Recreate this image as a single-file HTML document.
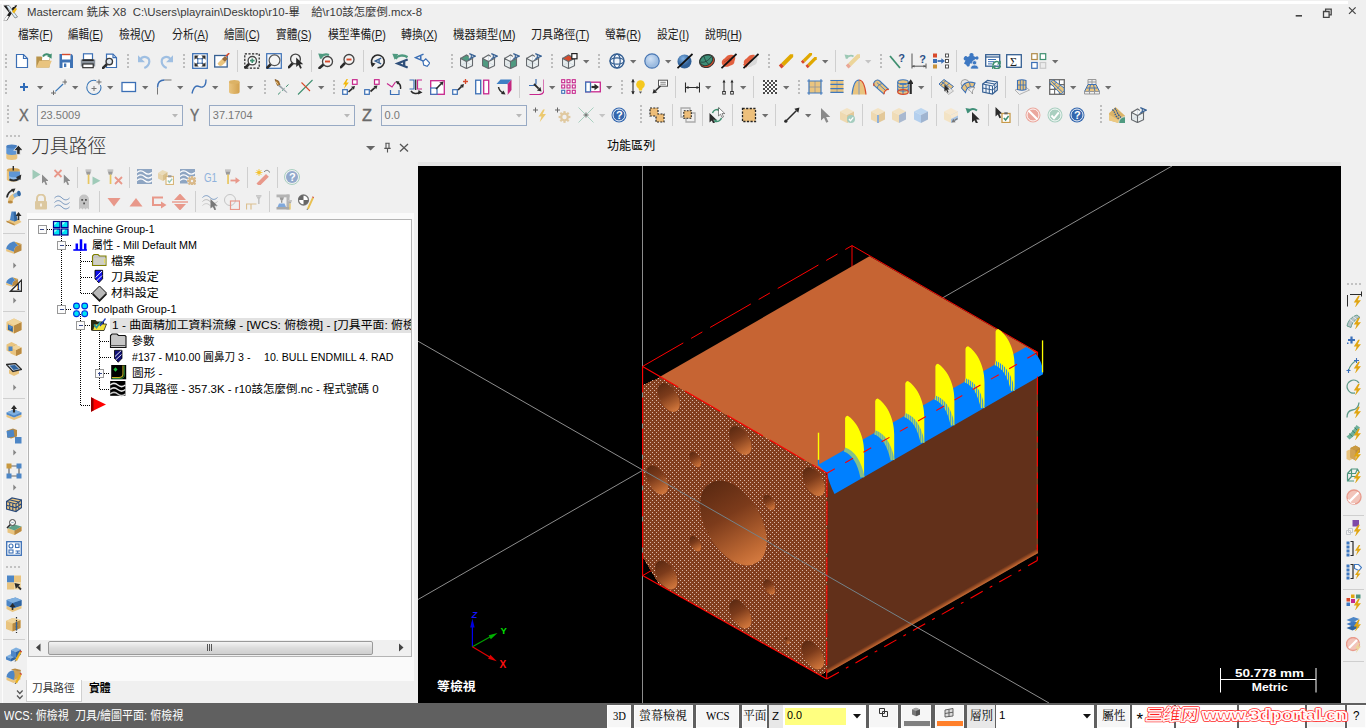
<!DOCTYPE html>
<html><head><meta charset="utf-8"><title>Mastercam</title><style>
html,body{margin:0;padding:0}
html{width:1366px;height:728px;overflow:hidden}
body{width:1366px;height:728px;overflow:hidden;background:#f0f0f0;position:relative;font-family:"Liberation Sans","Noto Sans CJK TC",sans-serif;font-size:12px}
.t{position:absolute;white-space:pre;line-height:1;transform-origin:0 50%}
.a{position:absolute}
i.sp{display:inline-block;width:1em}
u{text-decoration:underline;text-underline-offset:1px}
svg{overflow:visible}
svg.i{position:absolute;overflow:hidden}
</style></head><body><div class="a" style="left:0;top:1px;width:1348px;height:3px;background:#fff"></div>
<div class="a" style="left:1.8px;top:1px;width:1.3px;height:702px;background:#fcfcfc"></div>
<div class="t" style="left:26.5px;top:6.4px;font-size:11.6px;color:#3a3a3a;transform:scaleX(0.9825);">Mastercam 銑床 X8  C:\Users\playrain\Desktop\r10-畢<i class="sp"></i>給\r10該怎麼倒.mcx-8</div>
<svg class="a" style="left:1290px;top:4px" width="72" height="18" viewBox="1290 4 72 18" fill="none" stroke="#444" stroke-width="1.3"><path d="M1295.7,15.8H1302" stroke-width="1.6"/><path d="M1323.5,11.5h5.6v5.8h-5.6z M1325.6,11.3v-2.2h5.6v5.8h-2" /><path d="M1349,7.3l6.6,6.6M1355.6,7.3l-6.6,6.6" stroke-width="1.2"/></svg>
<div class="t" style="left:17.5px;top:28.6px;font-size:12px;color:#1a1a1a;transform:scaleX(0.8845);">檔案(<u>F</u>)</div>
<div class="t" style="left:68.4px;top:28.6px;font-size:12px;color:#1a1a1a;transform:scaleX(0.8772);">編輯(<u>E</u>)</div>
<div class="t" style="left:119px;top:28.6px;font-size:12px;color:#1a1a1a;transform:scaleX(0.9046);">檢視(<u>V</u>)</div>
<div class="t" style="left:171.6px;top:28.6px;font-size:12px;color:#1a1a1a;transform:scaleX(0.9096);">分析(<u>A</u>)</div>
<div class="t" style="left:224.2px;top:28.6px;font-size:12px;color:#1a1a1a;transform:scaleX(0.8802);">繪圖(<u>C</u>)</div>
<div class="t" style="left:276px;top:28.6px;font-size:12px;color:#1a1a1a;transform:scaleX(0.8872);">實體(<u>S</u>)</div>
<div class="t" style="left:327.7px;top:28.6px;font-size:12px;color:#1a1a1a;transform:scaleX(0.9029);">模型準備(<u>P</u>)</div>
<div class="t" style="left:401px;top:28.6px;font-size:12px;color:#1a1a1a;transform:scaleX(0.9071);">轉換(<u>X</u>)</div>
<div class="t" style="left:453px;top:28.6px;font-size:12px;color:#1a1a1a;transform:scaleX(0.9470);">機器類型(<u>M</u>)</div>
<div class="t" style="left:531px;top:28.6px;font-size:12px;color:#1a1a1a;transform:scaleX(0.9235);">刀具路徑(<u>T</u>)</div>
<div class="t" style="left:604.5px;top:28.6px;font-size:12px;color:#1a1a1a;transform:scaleX(0.8851);">螢幕(<u>R</u>)</div>
<div class="t" style="left:656.5px;top:28.6px;font-size:12px;color:#1a1a1a;transform:scaleX(0.9054);">設定(<u>I</u>)</div>
<div class="t" style="left:704.5px;top:28.6px;font-size:12px;color:#1a1a1a;transform:scaleX(0.9097);">說明(<u>H</u>)</div>
<div class="t" style="left:18.9px;top:107.4px;font-size:17.3px;color:#6a6a6a;transform:scaleX(0.8412);-webkit-text-stroke:0.4px #6a6a6a;">X</div>
<div class="a" style="left:37px;top:105px;width:145.7px;height:21px;background:#f2f2f2;border:1px solid #98aac4;box-sizing:border-box;"></div>
<div class="t" style="left:40.5px;top:109.5px;font-size:11px;color:#777;">23.5009</div>
<svg class="a" style="left:172.2px;top:114.25px" width="6" height="3.5" viewBox="0 0 6 3.5"><path d="M0,0H6L3,3.5Z" fill="#b8b8b8"/></svg>
<div class="t" style="left:190.3px;top:107.4px;font-size:17.3px;color:#6a6a6a;transform:scaleX(0.7978);-webkit-text-stroke:0.4px #6a6a6a;">Y</div>
<div class="a" style="left:209.3px;top:105px;width:145.4px;height:21px;background:#f2f2f2;border:1px solid #98aac4;box-sizing:border-box;"></div>
<div class="t" style="left:212.8px;top:109.5px;font-size:11px;color:#777;">37.1704</div>
<svg class="a" style="left:344.2px;top:114.25px" width="6" height="3.5" viewBox="0 0 6 3.5"><path d="M0,0H6L3,3.5Z" fill="#b8b8b8"/></svg>
<div class="t" style="left:362.3px;top:107.4px;font-size:17.3px;color:#6a6a6a;transform:scaleX(0.9467);-webkit-text-stroke:0.4px #6a6a6a;">Z</div>
<div class="a" style="left:381.1px;top:105px;width:145.6px;height:21px;background:#f2f2f2;border:1px solid #98aac4;box-sizing:border-box;"></div>
<div class="t" style="left:384.6px;top:109.5px;font-size:11px;color:#777;">0.0</div>
<svg class="a" style="left:516.2px;top:114.25px" width="6" height="3.5" viewBox="0 0 6 3.5"><path d="M0,0H6L3,3.5Z" fill="#b8b8b8"/></svg>
<svg class="a" style="left:418px;top:166px" width="923" height="537" viewBox="418 166 923 537"><defs>
<pattern id="dots" width="4" height="4" patternUnits="userSpaceOnUse"><rect width="4" height="4" fill="#823e1e"/><rect x="0" y="0" width="1" height="1" fill="#d9b6a6"/><rect x="2" y="2" width="1" height="1" fill="#d9b6a6"/></pattern>
<linearGradient id="hg" x1="0.15" y1="0" x2="0.85" y2="1" gradientTransform="rotate(-60 .5 .5)"><stop offset="0" stop-color="#5e2a13"/><stop offset=".35" stop-color="#8a4421"/><stop offset="1" stop-color="#dd7c42"/></linearGradient>
<pattern id="fr" width="2" height="2" patternUnits="userSpaceOnUse"><rect width="1" height="2" fill="#dcec30"/><rect x="1" width="1" height="2" fill="#2a94e4"/></pattern><linearGradient id="bf" gradientUnits="userSpaceOnUse" x1="930" y1="609.4" x2="932.4" y2="613.6"><stop offset="0" stop-color="#62301a"/><stop offset=".6" stop-color="#a65426"/><stop offset="1" stop-color="#c8703a"/></linearGradient>
<linearGradient id="rf" gradientUnits="userSpaceOnUse" x1="1035.5" y1="0" x2="1038.5" y2="0"><stop offset="0" stop-color="#62301a"/><stop offset="1" stop-color="#874822"/></linearGradient>
</defs><rect x="418" y="166" width="923" height="537" fill="#000"/><g stroke="#8c8c8c" stroke-width="1" fill="none"><line x1="418" y1="599.5" x2="1172" y2="166"/><line x1="642.5" y1="166" x2="642.5" y2="703"/></g><g stroke="#f00" stroke-width="1" fill="none"><line x1="642.6" y1="366.4" x2="852" y2="245.6" stroke-dasharray="47 9 13 9"/><line x1="852" y1="245.6" x2="852" y2="268"/><line x1="852" y1="245.6" x2="1037.5" y2="352.2"/><line x1="642.6" y1="575.6" x2="700" y2="542.5"/></g><polygon points="659.5,377.1 869.4,256.3 1037,352.4 827,473.2" fill="#c66433"/><polygon points="827,473.2 1038,352.4 1038,553 827,673.3" fill="#62301a"/><polygon points="1035,354.1 1038,352.4 1038,553 1035,554.7" fill="url(#rf)"/><polygon points="827,667.8 1038,547.5 1038,553 827,673.3" fill="url(#bf)"/><path d="M642.6,385.3 L659.5,377.1 L823.5,471.2 Q826.8,473.1 827,477 L827,667 Q826.5,676.5 818,674.5 L659.5,585.3 L642.6,557 Z" fill="url(#dots)" shape-rendering="crispEdges"/><linearGradient id="h0" gradientUnits="userSpaceOnUse" x1="710.4" y1="483.2" x2="756.4" y2="562.8"><stop offset="0" stop-color="#5c2a12"/><stop offset=".4" stop-color="#7c3b1b"/><stop offset=".85" stop-color="#c06a34"/><stop offset="1" stop-color="#d47a40"/></linearGradient><path d="M710.4,483.2A46,26.542 60 1 0 756.4,562.8A46,26.542 60 1 0 710.4,483.2z" fill="url(#h0)"/><linearGradient id="h1" gradientUnits="userSpaceOnUse" x1="660.8" y1="383.9" x2="676.5" y2="411.1"><stop offset="0" stop-color="#5c2a12"/><stop offset=".4" stop-color="#7c3b1b"/><stop offset=".85" stop-color="#c06a34"/><stop offset="1" stop-color="#d47a40"/></linearGradient><path d="M660.8,383.9A15.7,9.0589 60 1 0 676.5,411.1A15.7,9.0589 60 1 0 660.8,383.9z" fill="url(#h1)"/><linearGradient id="h2" gradientUnits="userSpaceOnUse" x1="732.5" y1="426.9" x2="748.2" y2="454.1"><stop offset="0" stop-color="#5c2a12"/><stop offset=".4" stop-color="#7c3b1b"/><stop offset=".85" stop-color="#c06a34"/><stop offset="1" stop-color="#d47a40"/></linearGradient><path d="M732.5,426.9A15.7,9.0589 60 1 0 748.2,454.1A15.7,9.0589 60 1 0 732.5,426.9z" fill="url(#h2)"/><linearGradient id="h3" gradientUnits="userSpaceOnUse" x1="805.9" y1="468.1" x2="821.6" y2="495.3"><stop offset="0" stop-color="#5c2a12"/><stop offset=".4" stop-color="#7c3b1b"/><stop offset=".85" stop-color="#c06a34"/><stop offset="1" stop-color="#d47a40"/></linearGradient><path d="M805.9,468.1A15.7,9.0589 60 1 0 821.6,495.3A15.7,9.0589 60 1 0 805.9,468.1z" fill="url(#h3)"/><linearGradient id="h4" gradientUnits="userSpaceOnUse" x1="649.1" y1="466.4" x2="664.9" y2="493.6"><stop offset="0" stop-color="#5c2a12"/><stop offset=".4" stop-color="#7c3b1b"/><stop offset=".85" stop-color="#c06a34"/><stop offset="1" stop-color="#d47a40"/></linearGradient><path d="M649.1,466.4A15.7,9.0589 60 1 0 664.9,493.6A15.7,9.0589 60 1 0 649.1,466.4z" fill="url(#h4)"/><linearGradient id="h5" gradientUnits="userSpaceOnUse" x1="658.4" y1="561.4" x2="674.1" y2="588.6"><stop offset="0" stop-color="#5c2a12"/><stop offset=".4" stop-color="#7c3b1b"/><stop offset=".85" stop-color="#c06a34"/><stop offset="1" stop-color="#d47a40"/></linearGradient><path d="M658.4,561.4A15.7,9.0589 60 1 0 674.1,588.6A15.7,9.0589 60 1 0 658.4,561.4z" fill="url(#h5)"/><linearGradient id="h6" gradientUnits="userSpaceOnUse" x1="732.5" y1="600.4" x2="748.2" y2="627.6"><stop offset="0" stop-color="#5c2a12"/><stop offset=".4" stop-color="#7c3b1b"/><stop offset=".85" stop-color="#c06a34"/><stop offset="1" stop-color="#d47a40"/></linearGradient><path d="M732.5,600.4A15.7,9.0589 60 1 0 748.2,627.6A15.7,9.0589 60 1 0 732.5,600.4z" fill="url(#h6)"/><linearGradient id="h7" gradientUnits="userSpaceOnUse" x1="805.0" y1="641.4" x2="820.8" y2="668.6"><stop offset="0" stop-color="#5c2a12"/><stop offset=".4" stop-color="#7c3b1b"/><stop offset=".85" stop-color="#c06a34"/><stop offset="1" stop-color="#d47a40"/></linearGradient><path d="M805.0,641.4A15.7,9.0589 60 1 0 820.8,668.6A15.7,9.0589 60 1 0 805.0,641.4z" fill="url(#h7)"/><linearGradient id="h8" gradientUnits="userSpaceOnUse" x1="691.2" y1="452.3" x2="699.5" y2="466.7"><stop offset="0" stop-color="#5c2a12"/><stop offset=".4" stop-color="#7c3b1b"/><stop offset=".85" stop-color="#c06a34"/><stop offset="1" stop-color="#d47a40"/></linearGradient><path d="M691.2,452.3A8.3,4.7891 60 1 0 699.5,466.7A8.3,4.7891 60 1 0 691.2,452.3z" fill="url(#h8)"/><linearGradient id="h9" gradientUnits="userSpaceOnUse" x1="765.1" y1="495.2" x2="773.4" y2="509.6"><stop offset="0" stop-color="#5c2a12"/><stop offset=".4" stop-color="#7c3b1b"/><stop offset=".85" stop-color="#c06a34"/><stop offset="1" stop-color="#d47a40"/></linearGradient><path d="M765.1,495.2A8.3,4.7891 60 1 0 773.4,509.6A8.3,4.7891 60 1 0 765.1,495.2z" fill="url(#h9)"/><linearGradient id="h10" gradientUnits="userSpaceOnUse" x1="691.2" y1="536.5" x2="699.5" y2="550.9"><stop offset="0" stop-color="#5c2a12"/><stop offset=".4" stop-color="#7c3b1b"/><stop offset=".85" stop-color="#c06a34"/><stop offset="1" stop-color="#d47a40"/></linearGradient><path d="M691.2,536.5A8.3,4.7891 60 1 0 699.5,550.9A8.3,4.7891 60 1 0 691.2,536.5z" fill="url(#h10)"/><linearGradient id="h11" gradientUnits="userSpaceOnUse" x1="765.1" y1="579.8" x2="773.4" y2="594.2"><stop offset="0" stop-color="#5c2a12"/><stop offset=".4" stop-color="#7c3b1b"/><stop offset=".85" stop-color="#c06a34"/><stop offset="1" stop-color="#d47a40"/></linearGradient><path d="M765.1,579.8A8.3,4.7891 60 1 0 773.4,594.2A8.3,4.7891 60 1 0 765.1,579.8z" fill="url(#h11)"/><linearGradient id="h12" gradientUnits="userSpaceOnUse" x1="785.1" y1="637.2" x2="788.9" y2="643.8"><stop offset="0" stop-color="#5c2a12"/><stop offset=".4" stop-color="#7c3b1b"/><stop offset=".85" stop-color="#c06a34"/><stop offset="1" stop-color="#d47a40"/></linearGradient><path d="M785.1,637.2A3.8,2.1926 60 1 0 788.9,643.8A3.8,2.1926 60 1 0 785.1,637.2z" fill="url(#h12)"/><path d="M817.9,465 L827,473.2 Q829,483 834.5,494 L1043,374.2 L1043,371 Q1041,354 1026,347 Z" fill="#0080ff"/><rect x="817.8" y="432.7" width="1.4" height="27.5" fill="#ff0"/><rect x="817.8" y="459.8" width="1.4" height="5.6" fill="#0080ff"/><rect x="1041.9" y="340.4" width="1.3" height="32" fill="#ff0"/><g transform="translate(845.1 415.6)"><path d="M0,2.6 Q0.4,0 2.6,0.1 C10,4.5 19,18 19,36 L19,62 L18,61.5 C14.5,45 8,36.5 0,33.8 Z" fill="#ff0"/><path d="M0,33.8 C8,36.5 14.5,45 18,61.5" fill="none" stroke="url(#fr)" stroke-width="4.2" transform="translate(-0.6 0.2)"/></g><g transform="translate(875.2 398.3)"><path d="M0,2.6 Q0.4,0 2.6,0.1 C10,4.5 19,18 19,36 L19,62 L18,61.5 C14.5,45 8,36.5 0,33.8 Z" fill="#ff0"/><path d="M0,33.8 C8,36.5 14.5,45 18,61.5" fill="none" stroke="url(#fr)" stroke-width="4.2" transform="translate(-0.6 0.2)"/></g><g transform="translate(905.3 380.9)"><path d="M0,2.6 Q0.4,0 2.6,0.1 C10,4.5 19,18 19,36 L19,62 L18,61.5 C14.5,45 8,36.5 0,33.8 Z" fill="#ff0"/><path d="M0,33.8 C8,36.5 14.5,45 18,61.5" fill="none" stroke="url(#fr)" stroke-width="4.2" transform="translate(-0.6 0.2)"/></g><g transform="translate(935.4 363.6)"><path d="M0,2.6 Q0.4,0 2.6,0.1 C10,4.5 19,18 19,36 L19,62 L18,61.5 C14.5,45 8,36.5 0,33.8 Z" fill="#ff0"/><path d="M0,33.8 C8,36.5 14.5,45 18,61.5" fill="none" stroke="url(#fr)" stroke-width="4.2" transform="translate(-0.6 0.2)"/></g><g transform="translate(965.5 346.2)"><path d="M0,2.6 Q0.4,0 2.6,0.1 C10,4.5 19,18 19,36 L19,62 L18,61.5 C14.5,45 8,36.5 0,33.8 Z" fill="#ff0"/><path d="M0,33.8 C8,36.5 14.5,45 18,61.5" fill="none" stroke="url(#fr)" stroke-width="4.2" transform="translate(-0.6 0.2)"/></g><g transform="translate(995.6 328.9)"><path d="M0,2.6 Q0.4,0 2.6,0.1 C10,4.5 19,18 19,36 L19,62 L18,61.5 C14.5,45 8,36.5 0,33.8 Z" fill="#ff0"/><path d="M0,33.8 C8,36.5 14.5,45 18,61.5" fill="none" stroke="url(#fr)" stroke-width="4.2" transform="translate(-0.6 0.2)"/></g><g stroke="#f00" stroke-width="1.1" fill="none"><line x1="642.6" y1="366.4" x2="827" y2="473.2" stroke-dasharray="20 0 0 0 21 8"/><line x1="642.6" y1="366.4" x2="642.6" y2="575.6" stroke-dasharray="26 5"/><line x1="642.6" y1="575.6" x2="826.7" y2="679.1"/><line x1="827" y1="473.2" x2="826.7" y2="679.1" stroke-dasharray="24 4"/><line x1="826.7" y1="679.1" x2="1037.3" y2="560.6" stroke-dasharray="14 8 3 8"/><line x1="1037.5" y1="376.5" x2="1037.3" y2="560.6" stroke-dasharray="18 6 6 6"/><path d="M1033,350l4.500,2.400v3"/><line x1="827" y1="473.2" x2="1037.5" y2="352.4" stroke-dasharray="9 12"/></g><path d="M418,341.2L642.5,469.9M911.6,624.2L1049,703" stroke="#8c8c8c" stroke-width="1"/><path d="M642.5,469.9L911.6,624.2" stroke="#74838a" stroke-width="1"/></svg>
<div class="a" style="left:26.5px;top:213px;width:387.5px;height:468px;background:#fafafa;"></div>
<div class="a" style="left:414px;top:166px;width:4px;height:537px;background:#f0f0f0;"></div>
<div class="a" style="left:418px;top:162px;width:923px;height:4px;background:#e6e6e6;"></div>
<div class="t" style="left:30.5px;top:137px;font-size:19px;color:#333;font-weight:300;transform:scaleX(0.9934);">刀具路徑</div>
<svg class="a" style="left:360px;top:140px" width="52" height="16" viewBox="360 140 52 16"><path d="M366,146h9.2l-4.6,4.6z" fill="#666"/><path d="M385.3,143.3h4.4M386,143.3v5h3v-5M384.3,148.4h6.4M387.5,148.4v4" stroke="#555" fill="none" stroke-width="1.1"/><path d="M400,144l8,7.5M408,144l-8,7.5" stroke="#555" stroke-width="1.3"/></svg>
<div class="a" style="left:28px;top:219px;width:384px;height:437.5px;background:#fff;border:1px solid #b4b4b4;box-sizing:border-box;"></div>
<div class="a" style="left:110px;top:317.5px;width:301px;height:15.5px;background:#e2e2e2;"></div>
<div class="t" style="left:73.2px;top:223.7px;font-size:11.5px;color:#000;transform:scaleX(0.9172);">Machine Group-1</div>
<div class="t" style="left:92.3px;top:239.7px;font-size:11.5px;color:#000;transform:scaleX(0.9337);">屬性 - Mill Default MM</div>
<div class="t" style="left:111.3px;top:255.7px;font-size:11.5px;color:#000;transform:scaleX(1.0435);">檔案</div>
<div class="t" style="left:111.3px;top:271.7px;font-size:11.5px;color:#000;transform:scaleX(1.0370);">刀具設定</div>
<div class="t" style="left:111.3px;top:287.7px;font-size:11.5px;color:#000;transform:scaleX(1.0370);">材料設定</div>
<div class="t" style="left:92.3px;top:303.7px;font-size:11.5px;color:#000;transform:scaleX(0.9508);">Toolpath Group-1</div>
<div class="a" style="left:110px;top:317px;width:301px;height:16px;overflow:hidden">
<div class="t" style="left:2.2px;top:2.7px;font-size:11.5px;color:#000;transform:scaleX(1.0325);">1 - 曲面精加工資料流線 - [WCS: 俯檢視] - [刀具平面: 俯檢視]</div>
</div>
<div class="t" style="left:131.6px;top:335.7px;font-size:11.5px;color:#000;transform:scaleX(1.0000);">參數</div>
<div class="t" style="left:131.6px;top:351.7px;font-size:11.5px;color:#000;transform:scaleX(0.9221);">#137 - M10.00 圓鼻刀 3 -<i class="sp"></i> 10. BULL ENDMILL 4. RAD</div>
<div class="t" style="left:131.6px;top:367.7px;font-size:11.5px;color:#000;transform:scaleX(1.0156);">圖形 -</div>
<div class="t" style="left:131.6px;top:383.7px;font-size:11.5px;color:#000;transform:scaleX(0.9997);">刀具路徑 - 357.3K - r10該怎麼倒.nc - 程式號碼 0</div>
<svg class="a" style="left:0;top:0" width="420" height="420"><path d="M47,229.5H52M61.5,234V309M66,245.5H72M66,309.5H72M80.5,250V293M81,261.5H92M81,277.5H93M81,293.5H92M80.5,314V405M85,325.5H91M81,405.5H91M99.5,330V389M100,341.5H110M100,357.5H112M104,373.5H110M100,389.5H110" stroke="#000" stroke-width="1" stroke-dasharray="1 1" fill="none" shape-rendering="crispEdges"/>
<rect x="38" y="225.5" width="8" height="8" fill="#fbfbfb" stroke="#989898" shape-rendering="crispEdges"/>
<path d="M40,229.5h4" stroke="#3a4a8c" shape-rendering="crispEdges"/>
<rect x="57.5" y="241.5" width="8" height="8" fill="#fbfbfb" stroke="#989898" shape-rendering="crispEdges"/>
<path d="M59.5,245.5h4" stroke="#3a4a8c" shape-rendering="crispEdges"/>
<rect x="57.5" y="305.5" width="8" height="8" fill="#fbfbfb" stroke="#989898" shape-rendering="crispEdges"/>
<path d="M59.5,309.5h4" stroke="#3a4a8c" shape-rendering="crispEdges"/>
<rect x="76.5" y="321.5" width="8" height="8" fill="#fbfbfb" stroke="#989898" shape-rendering="crispEdges"/>
<path d="M78.5,325.5h4" stroke="#3a4a8c" shape-rendering="crispEdges"/>
<rect x="95.5" y="369.5" width="8" height="8" fill="#fbfbfb" stroke="#989898" shape-rendering="crispEdges"/>
<path d="M97.5,373.5h4" stroke="#3a4a8c" shape-rendering="crispEdges"/>
<path d="M99.5,371.5v4" stroke="#3a4a8c" shape-rendering="crispEdges"/>
</svg>
<div class="a" style="left:29px;top:640px;width:382px;height:15.5px;background:#f0f0f0;"></div>
<div class="a" style="left:47.6px;top:640.5px;width:325px;height:14.5px;border:1px solid #9a9a9a;box-sizing:border-box;background:linear-gradient(#f4f4f4,#dcdcdc 50%,#cfcfcf);border-radius:2px"></div>
<svg class="a" style="left:30px;top:640px" width="381" height="16" viewBox="30 640 381 16"><path d="M40.5,643.5v8l-4.500,-4z M399,643.5v8l4.500,-4z" fill="#444"/><path d="M207.5,644v7M209.5,644v7M211.5,644v7" stroke="#555" stroke-width="1"/></svg>
<div class="a" style="left:26px;top:680px;width:56px;height:22px;background:#fff;border:1px solid #d0d0d0;box-sizing:border-box;border-top:none"></div>
<div class="t" style="left:32.4px;top:682.5px;font-size:11px;color:#333;transform:scaleX(0.9682);">刀具路徑</div>
<div class="t" style="left:89.2px;top:682.5px;font-size:11px;color:#000;font-weight:bold;transform:scaleX(0.9773);">實體</div>
<svg class="a" style="left:15px;top:689px" width="10" height="12" viewBox="0 0 10 12"><path d="M2,1.5l2.800,3l2.800,-3M2,6.5l2.800,3l2.800,-3" stroke="#555" fill="none" stroke-width="1.2"/></svg>
<div class="t" style="left:607px;top:139.5px;font-size:12px;color:#000;transform:scaleX(1.0042);">功能區列</div>
<div class="t" style="left:437px;top:680.5px;font-size:12.5px;color:#fff;font-weight:bold;transform:scaleX(1.0320);">等檢視</div>
<svg class="a" style="left:440px;top:600px" width="90" height="80" viewBox="440 600 90 80"><path d="M472.4,646.8V622" stroke="#0000f0" stroke-width="1.2"/><path d="M472.4,618.5l-2.200,9h4.400z" fill="#0000e0"/><path d="M472.4,646.8L493,635.3" stroke="#00a000" stroke-width="1.2"/><path d="M497.5,633l-8.800,2.300l2.100,3.900z" fill="#00b000"/><path d="M472.4,646.8L492.5,658.8" stroke="#e00000" stroke-width="1.2"/><path d="M496.8,661.3l-6.500,-6.500l-2.200,3.900z" fill="#e00000"/><text x="471.8" y="618" font-size="9" font-weight="bold" font-style="italic" fill="#1414ff" font-family="Liberation Sans">Z</text><text x="500.5" y="633.5" font-size="9.500" font-weight="bold" fill="#00e000" font-family="Liberation Sans">Y</text><text x="499.5" y="668" font-size="10" font-weight="bold" fill="#ff1010" font-family="Liberation Sans">X</text></svg>
<svg class="a" style="left:1215px;top:664px" width="110" height="32" viewBox="1215 664 110 32"><path d="M1220.5,668V692.5M1316,668V692.5M1220.5,679.5H1316" stroke="#fff" stroke-width="1"/><text x="1235" y="677.3" font-size="11" font-weight="bold" fill="#fff" font-family="Liberation Sans" textLength="69" lengthAdjust="spacingAndGlyphs">50.778 mm</text><text x="1251.8" y="691" font-size="11" font-weight="bold" fill="#fff" font-family="Liberation Sans" textLength="36" lengthAdjust="spacingAndGlyphs">Metric</text></svg>
<div class="a" style="left:0px;top:703px;width:1366px;height:25px;background:#606060;"></div>
<div class="t" style="left:3.7px;top:710px;font-size:12px;color:#fff;transform:scaleX(0.9178);">WCS: 俯檢視  刀具/繪圖平面: 俯檢視</div>
<div class="a" style="left:607px;top:705px;width:24.2px;height:23px;background:#f6f6f6;border:1px solid #fdfdfd;box-sizing:border-box;"></div>
<div class="t" style="left:612.6px;top:709.5px;font-size:12.5px;color:#000;font-family:'Liberation Serif','Noto Serif CJK SC',serif;transform:scaleX(0.8507);">3D</div>
<div class="a" style="left:633.5px;top:705px;width:59.5px;height:23px;background:#f6f6f6;border:1px solid #fdfdfd;box-sizing:border-box;"></div>
<div class="t" style="left:639.25px;top:709.5px;font-size:12.5px;color:#000;font-family:'Liberation Serif','Noto Serif CJK SC',serif;transform:scaleX(0.9600);">螢幕檢視</div>
<div class="a" style="left:695.5px;top:705px;width:43.7px;height:23px;background:#f6f6f6;border:1px solid #fdfdfd;box-sizing:border-box;"></div>
<div class="t" style="left:705.6px;top:709.5px;font-size:12.5px;color:#000;font-family:'Liberation Serif','Noto Serif CJK SC',serif;transform:scaleX(0.8674);">WCS</div>
<div class="a" style="left:741.5px;top:705px;width:25.5px;height:23px;background:#f6f6f6;border:1px solid #fdfdfd;box-sizing:border-box;"></div>
<div class="t" style="left:742.5px;top:709.5px;font-size:12.5px;color:#000;font-family:'Liberation Serif','Noto Serif CJK SC',serif;transform:scaleX(0.9400);">平面</div>
<div class="a" style="left:769px;top:705px;width:13.5px;height:23px;background:#e8e8e8;"></div>
<div class="t" style="left:772px;top:710.5px;font-size:11.5px;color:#000;transform:scaleX(0.9956);">Z</div>
<div class="a" style="left:783px;top:705px;width:83px;height:23px;background:#fff;"></div>
<div class="a" style="left:784.5px;top:707.5px;width:61.5px;height:17px;background:#ffff80;"></div>
<div class="t" style="left:786.5px;top:709.5px;font-size:11.5px;color:#000;transform:scaleX(0.9375);">0.0</div>
<svg class="a" style="left:853px;top:714.25px" width="8" height="4.5" viewBox="0 0 8 4.5"><path d="M0,0H8L4,4.5Z" fill="#111"/></svg>
<div class="a" style="left:868.5px;top:705px;width:29.8px;height:23px;background:#f6f6f6;border:1px solid #fdfdfd;box-sizing:border-box;"></div>
<div class="a" style="left:901.2px;top:705px;width:30.1px;height:23px;background:#f6f6f6;border:1px solid #fdfdfd;box-sizing:border-box;"></div>
<div class="a" style="left:934.5px;top:705px;width:29.8px;height:23px;background:#f6f6f6;border:1px solid #fdfdfd;box-sizing:border-box;"></div>
<div class="a" style="left:903.5px;top:720.5px;width:26px;height:5.5px;background:#808080;"></div>
<div class="a" style="left:936.5px;top:720.5px;width:26px;height:5.5px;background:#ff7f2a;"></div>
<svg class="a" style="left:868px;top:705px" width="98" height="16" viewBox="868 705 98 16"><path d="M879.5,708.5h5v5h-5z M882.5,711.5h5v5h-5z" fill="#f4f4f4" stroke="#333" stroke-width="1"/><path d="M912,709.5l4,-1.700l4,1.700v5l-4,1.800l-4,-1.800z" fill="#777"/><path d="M912,709.5l4,1.600l4,-1.600l-4,-1.700z" fill="#aaa"/><path d="M916,711.1v5.200l4,-1.800v-5z" fill="#555"/><path d="M945,710l8,-1.500v7.500l-8,1z" fill="#ddd" stroke="#555" stroke-width=".9"/><path d="M949,709.3v7.300M945,713.5l8,-1.300" stroke="#555" stroke-width=".9"/></svg>
<div class="a" style="left:967px;top:705px;width:27.5px;height:23px;background:#e8e8e8;"></div>
<div class="t" style="left:969.5px;top:710px;font-size:12.5px;color:#000;font-family:'Liberation Serif','Noto Serif CJK SC',serif;transform:scaleX(0.9200);">層別</div>
<div class="a" style="left:995.5px;top:705px;width:98.5px;height:23px;background:#fff;"></div>
<div class="t" style="left:999px;top:709.5px;font-size:11.5px;color:#000;">1</div>
<svg class="a" style="left:1083.2px;top:714.25px" width="8" height="4.5" viewBox="0 0 8 4.5"><path d="M0,0H8L4,4.5Z" fill="#111"/></svg>
<div class="a" style="left:1097.3px;top:705px;width:32.7px;height:23px;background:#f6f6f6;border:1px solid #fdfdfd;box-sizing:border-box;"></div>
<div class="t" style="left:1101.9px;top:709.5px;font-size:12.5px;color:#000;font-family:'Liberation Serif','Noto Serif CJK SC',serif;transform:scaleX(0.9400);">屬性</div>
<div class="a" style="left:1132.4px;top:705px;width:41.6px;height:23px;background:#fff;border:1px solid #fdfdfd;box-sizing:border-box;"></div>
<div class="a" style="left:1176px;top:705px;width:61.3px;height:23px;background:#fff;border:1px solid #fdfdfd;box-sizing:border-box;"></div>
<div class="a" style="left:1239.3px;top:705px;width:65.4px;height:23px;background:#fff;border:1px solid #fdfdfd;box-sizing:border-box;"></div>
<div class="a" style="left:1306.8px;top:705px;width:38.6px;height:23px;background:#f6f6f6;border:1px solid #fdfdfd;box-sizing:border-box;"></div>
<div class="a" style="left:1347.2px;top:705px;width:18.8px;height:23px;background:#f6f6f6;border:1px solid #fdfdfd;box-sizing:border-box;"></div>
<div class="t" style="left:1353.35px;top:709.5px;font-size:12.5px;color:#000;transform:scaleX(0.9348);">?</div>
<div class="t" style="left:1136.5px;top:710.5px;font-size:17px;color:#000;">*</div>
<svg class="a" style="left:1164px;top:714.75px" width="6" height="3.5" viewBox="0 0 6 3.5"><path d="M0,0H6L3,3.5Z" fill="#222"/></svg>
<svg class="a" style="left:1226px;top:714.75px" width="6" height="3.5" viewBox="0 0 6 3.5"><path d="M0,0H6L3,3.5Z" fill="#222"/></svg>
<svg class="a" style="left:1294px;top:714.75px" width="6" height="3.5" viewBox="0 0 6 3.5"><path d="M0,0H6L3,3.5Z" fill="#222"/></svg>
<svg class="a" style="left:1140px;top:702px" width="215" height="26" viewBox="1140 702 215 26"><g fill="none" stroke="#ff2a2a" stroke-width="3.6" stroke-linejoin="round"><text x="1203" y="719.6" font-size="14" font-weight="bold" font-family="Liberation Sans" textLength="144" lengthAdjust="spacingAndGlyphs">www.3dportal.cn</text><g stroke-width="3.5"><text transform="translate(1147.5 706.8) skewX(-8) scale(1.12 1)" x="0 15.71 31.43" y="13.2" font-size="15" font-weight="bold" font-family="'Liberation Sans','Noto Sans CJK SC',sans-serif">三维网</text></g></g><g fill="none" stroke="#fff" stroke-width="2.2" stroke-linejoin="round"><text x="1203" y="719.6" font-size="14" font-weight="bold" font-family="Liberation Sans" textLength="144" lengthAdjust="spacingAndGlyphs">www.3dportal.cn</text><g stroke-width="2.1"><text transform="translate(1147.5 706.8) skewX(-8) scale(1.12 1)" x="0 15.71 31.43" y="13.2" font-size="15" font-weight="bold" font-family="'Liberation Sans','Noto Sans CJK SC',sans-serif">三维网</text></g></g><g fill="#ff2020" stroke="#fff" stroke-width=".8"><text x="1203" y="719.6" font-size="14" font-weight="bold" font-family="Liberation Sans" textLength="144" lengthAdjust="spacingAndGlyphs">www.3dportal.cn</text><g stroke-width=".7"><text transform="translate(1147.5 706.8) skewX(-8) scale(1.12 1)" x="0 15.71 31.43" y="13.2" font-size="15" font-weight="bold" font-family="'Liberation Sans','Noto Sans CJK SC',sans-serif">三维网</text></g></g></svg>
<svg class="a" style="left:4.9px;top:53.7px" width="2" height="16"><rect x="0" y="0" width="2" height="2" fill="#bdbdbd"/><rect x="0" y="4" width="2" height="2" fill="#bdbdbd"/><rect x="0" y="8" width="2" height="2" fill="#bdbdbd"/><rect x="0" y="12" width="2" height="2" fill="#bdbdbd"/></svg>
<svg class="i" style="left:14px;top:53px" width="16" height="16" viewBox="0 0 16 16"><path d="M2.5,1.5h7l4,4v9h-11z" fill="#fff" stroke="#3b6fb5" stroke-width="1.2"/><path d="M9.5,1.5v4h4" fill="none" stroke="#3b6fb5" stroke-width="1.2"/></svg>
<svg class="i" style="left:36px;top:53px" width="16" height="16" viewBox="0 0 16 16"><path d="M0.3,3.5h5l1.5,1.7h6.7v9.3h-13.2z" fill="#b8934a"/><path d="M6,5.2l2,-2h5v4h-7z" fill="#fff"/><path d="M0.3,14.5l3,-6.8h12.5l-3,6.8z" fill="#e9c47f"/><path d="M7,3.6c1.500,-2.600 5,-3.200 7.200,-.8" fill="none" stroke="#3f8f70" stroke-width="2"/><path d="M15.800,0.400l-.3,5.400l-4.600,-2.800z" fill="#3f8f70"/></svg>
<svg class="i" style="left:57.6px;top:53px" width="16" height="16" viewBox="0 0 16 16"><path d="M1.5,1h12l1.5,1.5v12.5h-13.5z" fill="#3f73b5"/><rect x="4" y="1" width="8.5" height="5.5" fill="#fff"/><rect x="4" y="0.8" width="8.5" height="1.4" fill="#d84a2b"/><rect x="4.5" y="9.5" width="7.5" height="5.5" fill="#fff"/><rect x="6" y="10.5" width="2.3" height="3.6" fill="#3f73b5"/></svg>
<svg class="i" style="left:80.3px;top:53px" width="16" height="16" viewBox="0 0 16 16"><rect x="3.5" y="0.8" width="9" height="6" fill="#fff" stroke="#3b6fb5" stroke-width="1.2"/><path d="M0.8,6.5h14.4v7h-14.4z" fill="#8a929b"/><rect x="2.3" y="6.300" width="11.400" height="1.700" fill="#2a2a2a"/><rect x="2.800" y="11" width="10.400" height="3.700" fill="#fff" stroke="#222" stroke-width="1.100"/></svg>
<svg class="i" style="left:102.4px;top:53px" width="16" height="16" viewBox="0 0 16 16"><path d="M4.5,1.2h6.5l3.5,3.5v9.8h-10z" fill="#fff" stroke="#3b6fb5" stroke-width="1.2"/><path d="M11,1.2v3.5h3.5" fill="none" stroke="#3b6fb5" stroke-width="1.2"/><path d="M5.2,10.8L1,15" fill="none" stroke="#2b2b2b" stroke-width="2.5" stroke-linecap="round"/><circle cx="7.3" cy="8.6" r="3.2" fill="#dfe6ee" stroke="#3a3a3a" stroke-width="1.4"/></svg>
<svg class="a" style="left:127px;top:53.7px" width="2" height="16"><rect x="0" y="0" width="2" height="2" fill="#bdbdbd"/><rect x="0" y="4" width="2" height="2" fill="#bdbdbd"/><rect x="0" y="8" width="2" height="2" fill="#bdbdbd"/><rect x="0" y="12" width="2" height="2" fill="#bdbdbd"/></svg>
<svg class="i" style="left:136.5px;top:53px" width="16" height="16" viewBox="0 0 16 16"><path d="M3,6.8c3,-4.500 9.500,-3.500 9.300,2c-.2,3 -2,5 -5,6.200" fill="none" stroke="#9fbfe2" stroke-width="2.2"/><path d="M1,2.2v7h7z" fill="#9fbfe2"/></svg>
<svg class="i" style="left:158px;top:53px" width="16" height="16" viewBox="0 0 16 16"><g transform="translate(16 0) scale(-1 1)"><path d="M3,6.8c3,-4.500 9.500,-3.500 9.300,2c-.2,3 -2,5 -5,6.200" fill="none" stroke="#9fbfe2" stroke-width="2.2"/><path d="M1,2.2v7h7z" fill="#9fbfe2"/></g></svg>
<svg class="a" style="left:183px;top:53.7px" width="2" height="16"><rect x="0" y="0" width="2" height="2" fill="#bdbdbd"/><rect x="0" y="4" width="2" height="2" fill="#bdbdbd"/><rect x="0" y="8" width="2" height="2" fill="#bdbdbd"/><rect x="0" y="12" width="2" height="2" fill="#bdbdbd"/></svg>
<svg class="i" style="left:192px;top:53px" width="16" height="16" viewBox="0 0 16 16"><rect x="0.7" y="0.7" width="14.6" height="14.6" fill="#fff" stroke="#3b6fb5" stroke-width="1.3"/><path d="M4.5,4.5l7,7M11.5,4.5l-7,7" fill="none" stroke="#2b2b2b" stroke-width="1.5"/><path d="M2.5,2.5h4.2l-4.2,4.2zM13.5,2.5v4.2l-4.2,-4.2zM2.5,13.5v-4.2l4.2,4.2zM13.5,13.5h-4.2l4.2,-4.2z" fill="#2b2b2b"/><rect x="5.8" y="5.8" width="4.4" height="4.4" fill="#fff" stroke="#3b6fb5" stroke-width="1"/></svg>
<svg class="i" style="left:214px;top:53px" width="16" height="16" viewBox="0 0 16 16"><rect x="0.7" y="2.5" width="12.5" height="11.5" fill="#fff" stroke="#355f92" stroke-width="1.3"/><path d="M3.5,10.5l5,-5l3.5,3.5l-4,3.500c-2,1 -3.500,0 -4.500,-2z" fill="#e9c47f"/><path d="M8,6l3,-3l2.800,2.800l-2.800,3z" fill="#9a6a3a"/><path d="M12,3.3l3.200,-3.200" fill="none" stroke="#d84a2b" stroke-width="1.6"/></svg>
<div class="a" style="left:237px;top:50px;width:1px;height:22px;background:#cfcfcf;"></div>
<svg class="i" style="left:244px;top:53px" width="16" height="16" viewBox="0 0 16 16"><rect x="0.8" y="0.8" width="14.4" height="14.4" fill="none" stroke="#222" stroke-width="1.2" stroke-dasharray="2.2 1.4"/><path d="M5,11L1.5,14.5" fill="none" stroke="#2b2b2b" stroke-width="2.6" stroke-linecap="round"/><circle cx="8.3" cy="7.7" r="4.2" fill="#fff" stroke="#444" stroke-width="1.3"/><path d="M8.3,5.4v4.6M6,7.7h4.6" fill="none" stroke="#3f8f70" stroke-width="1.7"/></svg>
<svg class="i" style="left:266px;top:53px" width="16" height="16" viewBox="0 0 16 16"><rect x="0.7" y="0.7" width="14.6" height="14.6" fill="#f6f8fb" stroke="#3b6fb5" stroke-width="1.2"/><path d="M4.5,11.5L1.5,14.5" fill="none" stroke="#2b2b2b" stroke-width="2.6" stroke-linecap="round"/><circle cx="8.5" cy="7.3" r="5.4" fill="#f4f4f4" stroke="#555" stroke-width="1.2"/></svg>
<svg class="i" style="left:288px;top:53px" width="16" height="16" viewBox="0 0 16 16"><path d="M4.5,10.5L1,14.2" fill="none" stroke="#2b2b2b" stroke-width="2.6" stroke-linecap="round"/><circle cx="7.5" cy="6" r="4.9" fill="#f4f4f4" stroke="#444" stroke-width="1.3"/><path d="M0,0v10l2.400,-2.200l1.800,4l1.700,-.8l-1.800,-3.900h3.300z" fill="#2b2b2b" transform="translate(8.2 4.6) scale(0.95)"/></svg>
<div class="a" style="left:311px;top:50px;width:1px;height:22px;background:#cfcfcf;"></div>
<svg class="i" style="left:317.8px;top:53px" width="16" height="16" viewBox="0 0 16 16"><path d="M5.5,11.5L1.5,15" fill="none" stroke="#2b2b2b" stroke-width="2.6" stroke-linecap="round"/><circle cx="9.5" cy="8.5" r="5" fill="#f4f4f4" stroke="#444" stroke-width="1.3"/><path d="M7,8.5h5" fill="none" stroke="#d84a2b" stroke-width="1.9"/><path d="M3,5.5c.5,-3.500 4,-5 8,-3.500" fill="none" stroke="#4f9a80" stroke-width="2.2"/><path d="M0.200,0.600l5.800,.4l-3.800,5.200z" fill="#4f9a80"/></svg>
<svg class="i" style="left:340px;top:53px" width="16" height="16" viewBox="0 0 16 16"><path d="M4.5,10.5L1,14.2" fill="none" stroke="#2b2b2b" stroke-width="2.6" stroke-linecap="round"/><circle cx="9" cy="6.5" r="5" fill="#f4f4f4" stroke="#444" stroke-width="1.3"/><path d="M6.5,6.5h5" fill="none" stroke="#d84a2b" stroke-width="1.9"/></svg>
<div class="a" style="left:363px;top:50px;width:1px;height:22px;background:#cfcfcf;"></div>
<svg class="i" style="left:370.4px;top:53px" width="16" height="16" viewBox="0 0 16 16"><path d="M3.2,12.8a6.400,6.400 0 1 1 4.300,2" fill="none" stroke="#2b2b2b" stroke-width="1.6"/><path d="M0.6,9.3l5,1.200l-3.600,3.800z" fill="#2b2b2b"/><path d="M0,7L3.2,0L6.4,7M1.2,4.6h4" fill="none" stroke="#355f92" stroke-width="1.5" transform="translate(5.2 10.9) rotate(-90) scale(.9 .85)"/></svg>
<svg class="i" style="left:391.7px;top:53px" width="16" height="16" viewBox="0 0 16 16"><path d="M3.5,5.8c2,-3.600 8,-4.400 12,-1.600" fill="none" stroke="#4f9a80" stroke-width="2.4"/><path d="M0.300,0.800l6,.3l-3.600,5.600z" fill="#4f9a80"/><path d="M0,7L3.2,0L6.4,7M1.2,4.6h4" fill="none" stroke="#2f4f7a" stroke-width="1.6" transform="translate(5.4 14.6) rotate(-90) scale(1.27 1.47)"/></svg>
<svg class="i" style="left:414px;top:53px" width="16" height="16" viewBox="0 0 16 16"><path d="M0,7L3.2,0L6.4,7M1.2,4.6h4" fill="none" stroke="#3b6fb5" stroke-width="1.35" transform="translate(1.4 8.1) rotate(-90) scale(1.09 1.16)"/><path d="M9,8.5l2.800,-2.600l4,4.200l-2.600,3.300l-3.500,-1.300z" fill="#fff" stroke="#3b6fb5" stroke-width="1.2"/></svg>
<svg class="a" style="left:451px;top:53.7px" width="2" height="16"><rect x="0" y="0" width="2" height="2" fill="#bdbdbd"/><rect x="0" y="4" width="2" height="2" fill="#bdbdbd"/><rect x="0" y="8" width="2" height="2" fill="#bdbdbd"/><rect x="0" y="12" width="2" height="2" fill="#bdbdbd"/></svg>
<svg class="i" style="left:460px;top:53px" width="16" height="16" viewBox="0 0 16 16"><path d="M0.5,5.5L6.5,2L12.5,5.5L6.5,8.6z" fill="#f6f8f8"/><path d="M0.5,5.5L6.5,8.6V15.6L0.5,12.7z" fill="#e6ecec"/><path d="M6.5,8.6L12.5,5.5V12.7L6.5,15.6z" fill="#eef2f2"/><path d="M6.5,2V9.3M0.5,12.7L6.5,9.3L12.5,12.7" fill="none" stroke="#cfd9e2" stroke-width="0.8"/><path d="M0.5,5.5L6.5,2L12.5,5.5L6.5,8.6z" fill="#4f9a80"/><path d="M0.5,5.5L6.5,2L12.5,5.5L6.5,8.6zM0.5,5.5L6.5,8.6V15.6L0.5,12.7zM6.5,8.6L12.5,5.5V12.7L6.5,15.6z" fill="none" stroke="#666a6e" stroke-width="1.1"/><path d="M8.6,0.2L16,3.4L9,6.2z" fill="#f0f0f0"/><path d="M9.3,0.6L15.4,3.1L9.6,5.6" fill="none" stroke="#355f92" stroke-width="1.2"/><path d="M11.3,1.6V4.7" fill="none" stroke="#355f92" stroke-width="1.1"/><path d="M9.6,5.6L8.8,7" fill="none" stroke="#355f92" stroke-width="1"/></svg>
<svg class="i" style="left:482px;top:53px" width="16" height="16" viewBox="0 0 16 16"><path d="M0.5,5.5L6.5,2L12.5,5.5L6.5,8.6z" fill="#f6f8f8"/><path d="M0.5,5.5L6.5,8.6V15.6L0.5,12.7z" fill="#e6ecec"/><path d="M6.5,8.6L12.5,5.5V12.7L6.5,15.6z" fill="#eef2f2"/><path d="M6.5,2V9.3M0.5,12.7L6.5,9.3L12.5,12.7" fill="none" stroke="#cfd9e2" stroke-width="0.8"/><path d="M0.5,5.5L6.5,8.6V15.6L0.5,12.7z" fill="#4f9a80"/><path d="M0.5,5.5L6.5,2L12.5,5.5L6.5,8.6zM0.5,5.5L6.5,8.6V15.6L0.5,12.7zM6.5,8.6L12.5,5.5V12.7L6.5,15.6z" fill="none" stroke="#666a6e" stroke-width="1.1"/><path d="M8.6,0.2L16,3.4L9,6.2z" fill="#f0f0f0"/><path d="M9.3,0.6L15.4,3.1L9.6,5.6" fill="none" stroke="#355f92" stroke-width="1.2"/><path d="M11.3,1.6V4.7" fill="none" stroke="#355f92" stroke-width="1.1"/><path d="M9.6,5.6L8.8,7" fill="none" stroke="#355f92" stroke-width="1"/></svg>
<svg class="i" style="left:504px;top:53px" width="16" height="16" viewBox="0 0 16 16"><path d="M0.5,5.5L6.5,2L12.5,5.5L6.5,8.6z" fill="#f6f8f8"/><path d="M0.5,5.5L6.5,8.6V15.6L0.5,12.7z" fill="#e6ecec"/><path d="M6.5,8.6L12.5,5.5V12.7L6.5,15.6z" fill="#eef2f2"/><path d="M6.5,2V9.3M0.5,12.7L6.5,9.3L12.5,12.7" fill="none" stroke="#cfd9e2" stroke-width="0.8"/><path d="M6.5,8.6L12.5,5.5V12.7L6.5,15.6z" fill="#4f9a80"/><path d="M0.5,5.5L6.5,2L12.5,5.5L6.5,8.6zM0.5,5.5L6.5,8.6V15.6L0.5,12.7zM6.5,8.6L12.5,5.5V12.7L6.5,15.6z" fill="none" stroke="#666a6e" stroke-width="1.1"/><path d="M8.6,0.2L16,3.4L9,6.2z" fill="#f0f0f0"/><path d="M9.3,0.6L15.4,3.1L9.6,5.6" fill="none" stroke="#355f92" stroke-width="1.2"/><path d="M11.3,1.6V4.7" fill="none" stroke="#355f92" stroke-width="1.1"/><path d="M9.6,5.6L8.8,7" fill="none" stroke="#355f92" stroke-width="1"/></svg>
<svg class="i" style="left:526px;top:53px" width="16" height="16" viewBox="0 0 16 16"><path d="M0.5,5.5L6.5,2L12.5,5.5L6.5,8.6z" fill="#f6f8f8"/><path d="M0.5,5.5L6.5,8.6V15.6L0.5,12.7z" fill="#e6ecec"/><path d="M6.5,8.6L12.5,5.5V12.7L6.5,15.6z" fill="#eef2f2"/><path d="M6.5,2V9.3M0.5,12.7L6.5,9.3L12.5,12.7" fill="none" stroke="#cfd9e2" stroke-width="0.8"/><path d="M0.5,5.5L6.5,2L12.5,5.5L6.5,8.6zM0.5,5.5L6.5,8.6V15.6L0.5,12.7zM6.5,8.6L12.5,5.5V12.7L6.5,15.6z" fill="none" stroke="#666a6e" stroke-width="1.1"/><path d="M8.6,0.2L16,3.4L9,6.2z" fill="#f0f0f0"/><path d="M9.3,0.6L15.4,3.1L9.6,5.6" fill="none" stroke="#355f92" stroke-width="1.2"/><path d="M11.3,1.6V4.7" fill="none" stroke="#355f92" stroke-width="1.1"/><path d="M9.6,5.6L8.8,7" fill="none" stroke="#355f92" stroke-width="1"/></svg>
<svg class="a" style="left:551px;top:53.7px" width="2" height="16"><rect x="0" y="0" width="2" height="2" fill="#bdbdbd"/><rect x="0" y="4" width="2" height="2" fill="#bdbdbd"/><rect x="0" y="8" width="2" height="2" fill="#bdbdbd"/><rect x="0" y="12" width="2" height="2" fill="#bdbdbd"/></svg>
<svg class="i" style="left:562px;top:53px" width="16" height="16" viewBox="0 0 16 16"><path d="M0.5,5.5L6.5,2L12.5,5.5L6.5,8.6z" fill="#f6f8f8"/><path d="M0.5,5.5L6.5,8.6V15.6L0.5,12.7z" fill="#e6ecec"/><path d="M6.5,8.6L12.5,5.5V12.7L6.5,15.6z" fill="#eef2f2"/><path d="M6.5,2V9.3M0.5,12.7L6.5,9.3L12.5,12.7" fill="none" stroke="#cfd9e2" stroke-width="0.8"/><path d="M0.5,5.5L6.5,2L12.5,5.5L6.5,8.6z" fill="#d84a2b"/><path d="M0.5,5.5L6.5,2L12.5,5.5L6.5,8.6zM0.5,5.5L6.5,8.6V15.6L0.5,12.7zM6.5,8.6L12.5,5.5V12.7L6.5,15.6z" fill="none" stroke="#666a6e" stroke-width="1.1"/><rect x="9.8" y="0.6" width="5.2" height="5.2" fill="#fff" stroke="#222" stroke-width="1.2"/></svg>
<svg class="a" style="left:583.3px;top:60px" width="6.4" height="3.6" viewBox="0 0 6.4 3.6"><path d="M0,0H6.4L3.2,3.6Z" fill="#6e6e6e"/></svg>
<svg class="a" style="left:598px;top:53.7px" width="2" height="16"><rect x="0" y="0" width="2" height="2" fill="#bdbdbd"/><rect x="0" y="4" width="2" height="2" fill="#bdbdbd"/><rect x="0" y="8" width="2" height="2" fill="#bdbdbd"/><rect x="0" y="12" width="2" height="2" fill="#bdbdbd"/></svg>
<svg class="i" style="left:609px;top:53px" width="16" height="16" viewBox="0 0 16 16"><circle cx="8" cy="8" r="7" fill="#eef3f9" stroke="#355f92" stroke-width="1.3"/><ellipse cx="8" cy="8" rx="3.2" ry="7" fill="none" stroke="#355f92" stroke-width="1.2"/><ellipse cx="8" cy="8" rx="7" ry="3.2" fill="none" stroke="#355f92" stroke-width="1.2"/></svg>
<svg class="a" style="left:630.1px;top:60px" width="6.4" height="3.6" viewBox="0 0 6.4 3.6"><path d="M0,0H6.4L3.2,3.6Z" fill="#6e6e6e"/></svg>
<svg class="i" style="left:643.7px;top:53px" width="16" height="16" viewBox="0 0 16 16"><defs><radialGradient id="sg" cx=".4" cy=".35"><stop offset="0" stop-color="#cfe0f4"/><stop offset="1" stop-color="#9dbce0"/></radialGradient></defs><circle cx="8" cy="8" r="7.2" fill="url(#sg)" stroke="#4a78b4" stroke-width="1.2"/></svg>
<svg class="a" style="left:664.8px;top:60px" width="6.4" height="3.6" viewBox="0 0 6.4 3.6"><path d="M0,0H6.4L3.2,3.6Z" fill="#6e6e6e"/></svg>
<svg class="i" style="left:676.8px;top:53px" width="16" height="16" viewBox="0 0 16 16"><defs><radialGradient id="sg2" cx=".4" cy=".3"><stop offset="0" stop-color="#7fb2e6"/><stop offset="1" stop-color="#2f5f96"/></radialGradient></defs><circle cx="7.5" cy="8.5" r="7" fill="url(#sg2)"/><path d="M0.5,15.2L15.5,1" fill="none" stroke="#111" stroke-width="1.8"/></svg>
<svg class="i" style="left:698.7px;top:53px" width="16" height="16" viewBox="0 0 16 16"><ellipse cx="8" cy="8" rx="7.6" ry="6.3" transform="rotate(-25 8 8)" fill="#d84a2b" stroke="#333" stroke-width="1"/><ellipse cx="7.3" cy="7.3" rx="6.6" ry="5" transform="rotate(-25 7.3 7.3)" fill="#3f8f78" stroke="#23423a" stroke-width="1"/><path d="M2,9c3,1 7,-1 10,-5M5,3.5c1,3 2,6 5,8" fill="none" stroke="#23423a" stroke-width="0.9"/></svg>
<svg class="i" style="left:721px;top:53px" width="16" height="16" viewBox="0 0 16 16"><path d="M1,11c-1,-4 2,-5 3,-6c2,-3 5,-4 8,-3c3,1 2.500,4 1.500,6c0,3 -2,4 -4,4.500c-3,2 -7,2 -8.500,-1.500z" fill="#e2603f"/><path d="M3,9c2,-1 4,-3 6,-4M5,11c2,-1 4,-2 6,-4" fill="none" stroke="#c24428" stroke-width="0.9"/><path d="M0.5,15.2L15.5,1" fill="none" stroke="#111" stroke-width="1.8"/></svg>
<svg class="i" style="left:742.8px;top:53px" width="16" height="16" viewBox="0 0 16 16"><path d="M1,11c-1,-4 2,-5 3,-6c2,-3 5,-4 8,-3l-8.500,12.500c-1.500,-.5 -2.800,-1.500 -3.500,-3.500z" fill="#e2603f"/><path d="M12.500,2.500c2.500,1 2.500,3.500 1.500,5.500c0,3 -2,4 -4,4.500c-2,1.500 -4,2 -6,1.500z" fill="#d9d9d9"/><path d="M0.5,15.2L15.5,1" fill="none" stroke="#111" stroke-width="1.8"/></svg>
<svg class="a" style="left:767.6px;top:53.7px" width="2" height="16"><rect x="0" y="0" width="2" height="2" fill="#bdbdbd"/><rect x="0" y="4" width="2" height="2" fill="#bdbdbd"/><rect x="0" y="8" width="2" height="2" fill="#bdbdbd"/><rect x="0" y="12" width="2" height="2" fill="#bdbdbd"/></svg>
<svg class="i" style="left:777.5px;top:53px" width="16" height="16" viewBox="0 0 16 16"><g transform="translate(0 0)" opacity="1"><path d="M3.2,10.2L12.2,1.2l3,0l0,2.800L6,13.2z" fill="#e0a800"/><path d="M0.8,12.5l2.400,-2.300l2.800,3l-2.500,2.200z" fill="#d84a2b"/></g></svg>
<svg class="i" style="left:800.6px;top:53px" width="16" height="16" viewBox="0 0 16 16"><g transform="scale(.78)"><g transform="translate(-1 -1.5)" opacity="1"><path d="M3.2,10.2L12.2,1.2l3,0l0,2.800L6,13.2z" fill="#e0a800"/><path d="M0.8,12.5l2.400,-2.300l2.800,3l-2.500,2.200z" fill="#d84a2b"/></g><g transform="translate(5 4)" opacity="1"><path d="M3.2,10.2L12.2,1.2l3,0l0,2.800L6,13.2z" fill="#e0a800"/><path d="M0.8,12.5l2.400,-2.300l2.800,3l-2.500,2.200z" fill="#d84a2b"/></g></g></svg>
<svg class="a" style="left:822.1px;top:60px" width="6.4" height="3.6" viewBox="0 0 6.4 3.6"><path d="M0,0H6.4L3.2,3.6Z" fill="#6e6e6e"/></svg>
<div class="a" style="left:834.9px;top:50px;width:1px;height:22px;background:#cfcfcf;"></div>
<svg class="i" style="left:843.5px;top:53px" width="16" height="16" viewBox="0 0 16 16"><g transform="translate(1 0)" opacity="1"><path d="M3.2,10.2L12.2,1.2l3,0l0,2.800L6,13.2z" fill="#ecd59a"/><path d="M0.8,12.5l2.400,-2.300l2.800,3l-2.500,2.200z" fill="#eaa896"/></g><path d="M2.500,5.500c1.500,-3 5,-3.500 7,-2" fill="none" stroke="#9cc8b4" stroke-width="1.7"/><path d="M0.5,1.5l4.500,.8l-3,4z" fill="#9cc8b4"/></svg>
<svg class="a" style="left:865.2px;top:60px" width="6.4" height="3.6" viewBox="0 0 6.4 3.6"><path d="M0,0H6.4L3.2,3.6Z" fill="#c4c4c4"/></svg>
<svg class="a" style="left:880px;top:53.7px" width="2" height="16"><rect x="0" y="0" width="2" height="2" fill="#bdbdbd"/><rect x="0" y="4" width="2" height="2" fill="#bdbdbd"/><rect x="0" y="8" width="2" height="2" fill="#bdbdbd"/><rect x="0" y="12" width="2" height="2" fill="#bdbdbd"/></svg>
<svg class="i" style="left:889.3px;top:53px" width="16" height="16" viewBox="0 0 16 16"><path d="M1,3l10,12" fill="none" stroke="#3f8f70" stroke-width="1.8"/><text x="9.3" y="9" font-size="11" font-weight="bold" font-family="Liberation Sans" fill="#2c4f86">?</text></svg>
<svg class="i" style="left:911.2px;top:53px" width="16" height="16" viewBox="0 0 16 16"><path d="M1,0.500v15M1,13.200h14M15,10.500v5" fill="none" stroke="#555" stroke-width="1"/><path d="M1,13.2l2.500,-1.200v2.400zM15,13.2l-2.500,-1.200v2.400z" fill="#555"/><text x="8.3" y="9.5" font-size="11" font-weight="bold" font-family="Liberation Sans" fill="#2c4f86">?</text></svg>
<svg class="i" style="left:932.8px;top:53px" width="16" height="16" viewBox="0 0 16 16"><rect x="0" y="0.5" width="4" height="4" fill="#d84a2b"/><rect x="0" y="6" width="4" height="4" fill="#3b6fb5"/><rect x="0" y="11.5" width="4" height="4" fill="#c9923a"/><path d="M4.500,8h5" fill="none" stroke="#3b6fb5" stroke-width="1.8"/><path d="M8.300,5.200l3.700,2.800l-3.700,2.800z" fill="#3b6fb5"/><rect x="12.500" y="1" width="3" height="3" fill="#fff" stroke="#444" stroke-width=".9"/><rect x="12.500" y="6.500" width="3" height="3" fill="#fff" stroke="#444" stroke-width=".9"/><rect x="12.500" y="12" width="3" height="3" fill="#fff" stroke="#444" stroke-width=".9"/></svg>
<div class="a" style="left:956.1px;top:50px;width:1px;height:22px;background:#cfcfcf;"></div>
<svg class="i" style="left:963.3px;top:53px" width="16" height="16" viewBox="0 0 16 16"><path d="M1,4.500c1,-2 2.500,-2 3.500,-.5l2,-1c-.5,-2 .5,-3 2,-3s2.500,1 2,3l2,1c1.500,-1.500 3,-.5 3,1s-1.500,2.500 -3,1l-2,1.500l1,3h-4.500l-.5,2.500c-1.500,1 -3,.5 -3,-1l-2.500,-1.500l1.500,-3c-1.500,0 -2.500,-1.500 -1.500,-3z" fill="#3d78c2"/><circle cx="11.500" cy="9.800" r="2.200" fill="#3d78c2" stroke="#f0f0f0" stroke-width=".7"/><path d="M7.500,16c0,-3 1.500,-4 4,-4s4,1 4,4z" fill="#3d78c2" stroke="#f0f0f0" stroke-width="0.7"/></svg>
<svg class="i" style="left:984.8px;top:53px" width="16" height="16" viewBox="0 0 16 16"><rect x="0.7" y="1.700" width="14" height="11.500" fill="#fff" stroke="#355f92" stroke-width="1.3"/><path d="M0.7,4h14" fill="none" stroke="#355f92" stroke-width="1.3"/><path d="M3,6.500h8M3,8.700h6M3,10.900h4" fill="none" stroke="#3b6fb5" stroke-width="1"/><path d="M8,12a3.600,3.600 0 0 1 6.500,-2" fill="none" stroke="#3f8f70" stroke-width="1.7"/><path d="M15.800,7.500v4h-4z" fill="#3f8f70"/><path d="M15.300,12.500a3.600,3.600 0 0 1 -6.500,1.800" fill="none" stroke="#3f8f70" stroke-width="1.7"/><path d="M7,16.500v-4h4z" fill="#3f8f70"/></svg>
<svg class="i" style="left:1006.3px;top:53px" width="16" height="16" viewBox="0 0 16 16"><rect x="0.7" y="1.700" width="14.600" height="12.600" fill="#fff" stroke="#355f92" stroke-width="1.3"/><text x="4" y="12.500" font-size="12" font-family="Liberation Serif" fill="#222">Σ</text></svg>
<svg class="i" style="left:1031.2px;top:53px" width="16" height="16" viewBox="0 0 16 16"><rect x="0.700" y="0.700" width="5.500" height="5.800" fill="#fff" stroke="#b08a48" stroke-width="1.200"/><rect x="9.200" y="0.700" width="5.500" height="5.800" fill="#fff" stroke="#3f8f70" stroke-width="1.200"/><rect x="0.700" y="9.500" width="5.500" height="5.800" fill="#fff" stroke="#3b6fb5" stroke-width="1.200"/><rect x="9.200" y="9.500" width="5.500" height="5.800" fill="#ececec" stroke="#c9c9c9" stroke-width="1.200"/></svg>
<svg class="a" style="left:1052.3px;top:60px" width="6.4" height="3.6" viewBox="0 0 6.4 3.6"><path d="M0,0H6.4L3.2,3.6Z" fill="#6e6e6e"/></svg>
<svg class="a" style="left:4.9px;top:79.5px" width="2" height="16"><rect x="0" y="0" width="2" height="2" fill="#bdbdbd"/><rect x="0" y="4" width="2" height="2" fill="#bdbdbd"/><rect x="0" y="8" width="2" height="2" fill="#bdbdbd"/><rect x="0" y="12" width="2" height="2" fill="#bdbdbd"/></svg>
<svg class="i" style="left:16px;top:78.8px" width="16" height="16" viewBox="0 0 16 16"><path d="M8,4v8M4,8h8" fill="none" stroke="#2f6bb8" stroke-width="2"/></svg>
<svg class="a" style="left:37.2px;top:85.8px" width="6.4" height="3.6" viewBox="0 0 6.4 3.6"><path d="M0,0H6.4L3.2,3.6Z" fill="#6e6e6e"/></svg>
<svg class="i" style="left:50.8px;top:78.8px" width="16" height="16" viewBox="0 0 16 16"><path d="M4.4,12.4L12.1,5" fill="none" stroke="#3b78b8" stroke-width="1.2"/><path d="M0,14h5M2.5,11.5v5" fill="none" stroke="#6a6a6a" stroke-width="1"/><path d="M11.5,3h5M14,0.5v5" fill="none" stroke="#6a6a6a" stroke-width="1"/></svg>
<svg class="a" style="left:72.2px;top:85.8px" width="6.4" height="3.6" viewBox="0 0 6.4 3.6"><path d="M0,0H6.4L3.2,3.6Z" fill="#6e6e6e"/></svg>
<svg class="i" style="left:85.6px;top:78.8px" width="16" height="16" viewBox="0 0 16 16"><circle cx="7.9" cy="8.4" r="7.1" fill="none" stroke="#3b78b8" stroke-width="1.1"/><path d="M5.5,9.5h5M8,7v5" fill="none" stroke="#777" stroke-width="1"/><rect x="10.2" y="0" width="5.8" height="6" fill="#f0f0f0"/><path d="M10.5,3h5M13,0.5v5" fill="none" stroke="#6a6a6a" stroke-width="1"/></svg>
<svg class="a" style="left:107.1px;top:85.8px" width="6.4" height="3.6" viewBox="0 0 6.4 3.6"><path d="M0,0H6.4L3.2,3.6Z" fill="#6e6e6e"/></svg>
<svg class="i" style="left:121.3px;top:78.8px" width="16" height="16" viewBox="0 0 16 16"><rect x="1" y="3.500" width="13.500" height="9" fill="#fff" stroke="#3b6fb5" stroke-width="1.300"/></svg>
<svg class="a" style="left:142.4px;top:85.8px" width="6.4" height="3.6" viewBox="0 0 6.4 3.6"><path d="M0,0H6.4L3.2,3.6Z" fill="#6e6e6e"/></svg>
<svg class="i" style="left:156px;top:78.8px" width="16" height="16" viewBox="0 0 16 16"><path d="M1.500,15.500v-7" fill="none" stroke="#777" stroke-width="1"/><path d="M1.500,8.500c0,-5 3,-7.500 7,-7.500" fill="none" stroke="#3b6fb5" stroke-width="1.3"/><path d="M8.500,1h7" fill="none" stroke="#777" stroke-width="1"/></svg>
<svg class="a" style="left:177.3px;top:85.8px" width="6.4" height="3.6" viewBox="0 0 6.4 3.6"><path d="M0,0H6.4L3.2,3.6Z" fill="#6e6e6e"/></svg>
<svg class="i" style="left:191.3px;top:78.8px" width="16" height="16" viewBox="0 0 16 16"><path d="M1,14.500c1,-4 2.500,-7.500 5,-7.500s3,1.500 5.500,1s3.500,-4 3.500,-7.500" fill="none" stroke="#3b6fb5" stroke-width="1.4"/></svg>
<svg class="a" style="left:212.3px;top:85.8px" width="6.4" height="3.6" viewBox="0 0 6.4 3.6"><path d="M0,0H6.4L3.2,3.6Z" fill="#6e6e6e"/></svg>
<svg class="i" style="left:225.7px;top:78.8px" width="16" height="16" viewBox="0 0 16 16"><defs><linearGradient id="cg" x1="0" x2="1"><stop offset="0" stop-color="#e9c47f"/><stop offset="1" stop-color="#d2a14e"/></linearGradient></defs><path d="M3,3v10a5.300,1.900 0 0 0 10.600,0v-10z" fill="url(#cg)"/><ellipse cx="8.300" cy="3" rx="5.300" ry="1.900" fill="#dcb265"/></svg>
<svg class="a" style="left:247.1px;top:85.8px" width="6.4" height="3.6" viewBox="0 0 6.4 3.6"><path d="M0,0H6.4L3.2,3.6Z" fill="#6e6e6e"/></svg>
<svg class="a" style="left:264px;top:79.5px" width="2" height="16"><rect x="0" y="0" width="2" height="2" fill="#bdbdbd"/><rect x="0" y="4" width="2" height="2" fill="#bdbdbd"/><rect x="0" y="8" width="2" height="2" fill="#bdbdbd"/><rect x="0" y="12" width="2" height="2" fill="#bdbdbd"/></svg>
<svg class="i" style="left:273px;top:78.8px" width="16" height="16" viewBox="0 0 16 16"><path d="M5,15.500L15.500,5.500" fill="none" stroke="#3f8f70" stroke-width="1" stroke-dasharray="3.500 2"/><path d="M2,0.500l3.500,1.500l1.500,4l-2.500,0.500z" fill="#b0772e" stroke="#7a4f1c" stroke-width="0.7"/><path d="M4.500,6.500l2.500,-.5l7.500,7.500l-1,.3z" fill="#9aa2aa"/><path d="M3,2.500l2,3" fill="none" stroke="#f0d59a" stroke-width="1"/></svg>
<svg class="i" style="left:296.6px;top:78.8px" width="16" height="16" viewBox="0 0 16 16"><path d="M1,15.500L15.500,1" fill="none" stroke="#3f8f70" stroke-width="1.1"/><path d="M4.500,3.500L13,12" fill="none" stroke="#d84a2b" stroke-width="1.1"/></svg>
<svg class="a" style="left:318.2px;top:85.8px" width="6.4" height="3.6" viewBox="0 0 6.4 3.6"><path d="M0,0H6.4L3.2,3.6Z" fill="#6e6e6e"/></svg>
<svg class="a" style="left:333px;top:79.5px" width="2" height="16"><rect x="0" y="0" width="2" height="2" fill="#bdbdbd"/><rect x="0" y="4" width="2" height="2" fill="#bdbdbd"/><rect x="0" y="8" width="2" height="2" fill="#bdbdbd"/><rect x="0" y="12" width="2" height="2" fill="#bdbdbd"/></svg>
<svg class="i" style="left:342px;top:78.8px" width="16" height="16" viewBox="0 0 16 16"><path d="M4,0L0,6h2.6L1,11L6.5,4H3.6L5.5,0z" fill="#f2b90c" transform="translate(1 0) scale(0.9)"/><rect x="10.5" y="0.7" width="4.6" height="4.6" fill="#fff" stroke="#c7278d" stroke-width="1.200"/><rect x="0.7" y="10.7" width="4.6" height="4.6" fill="#fff" stroke="#3b6fb5" stroke-width="1.200"/><path d="M6.5,13L10.5017,9.30615" fill="none" stroke="#2b2b2b" stroke-width="1.7"/><path d="M13.00,7.00L11.93,10.86L9.07,7.76z" fill="#2b2b2b"/></svg>
<svg class="i" style="left:364.2px;top:78.8px" width="16" height="16" viewBox="0 0 16 16"><rect x="10.5" y="0.7" width="4.6" height="4.6" fill="#fff" stroke="#c7278d" stroke-width="1.200"/><rect x="0.7" y="10.7" width="4.6" height="4.6" fill="#fff" stroke="#3b6fb5" stroke-width="1.200"/><path d="M6.5,12.5L10.9185,8.71269" fill="none" stroke="#2b2b2b" stroke-width="1.7"/><path d="M13.50,6.50L12.29,10.31L9.55,7.11z" fill="#2b2b2b"/></svg>
<svg class="i" style="left:386px;top:78.8px" width="16" height="16" viewBox="0 0 16 16"><path d="M1,4.500l5,3.500l3.500,-5" fill="none" stroke="#c7278d" stroke-width="1.2"/><path d="M4.500,11v4.500h8.500v-4.500" fill="none" stroke="#3b6fb5" stroke-width="1.2"/><path d="M14.500,10c.5,-3 -1,-5.500 -3,-6.500" fill="none" stroke="#2b2b2b" stroke-width="1.4"/><path d="M9.500,2l4,.5l-2,3z" fill="#2b2b2b"/></svg>
<svg class="i" style="left:407.5px;top:78.8px" width="16" height="16" viewBox="0 0 16 16"><path d="M7.7,0.5v10.5" fill="none" stroke="#2b2b2b" stroke-width="1.3"/><path d="M1.500,1h4.500v9h-4.500" fill="none" stroke="#3b6fb5" stroke-width="1.2"/><path d="M14,1h-4.500v9h4.500" fill="none" stroke="#c7278d" stroke-width="1.2"/><path d="M3,12c2,3 6,3 8.500,1.500" fill="none" stroke="#2b2b2b" stroke-width="1.5"/><path d="M14.500,13.500l-4.500,2l.5,-4.500z" fill="#2b2b2b"/></svg>
<svg class="i" style="left:430px;top:78.8px" width="16" height="16" viewBox="0 0 16 16"><rect x="0.700" y="1.700" width="13.600" height="13.600" fill="#fff" stroke="#c7278d" stroke-width="1.300"/><rect x="0.7" y="9" width="6.3" height="6.3" fill="#fff" stroke="#3b6fb5" stroke-width="1.200"/><path d="M6,10L10.9544,5.04558" fill="none" stroke="#2b2b2b" stroke-width="1.6"/><path d="M13.50,2.50L12.53,6.62L9.38,3.47z" fill="#2b2b2b"/></svg>
<svg class="i" style="left:451.8px;top:78.8px" width="16" height="16" viewBox="0 0 16 16"><rect x="0.7" y="10.7" width="4.6" height="4.6" fill="#fff" stroke="#3b6fb5" stroke-width="1.200"/><path d="M6,11L9.59584,7.40416" fill="none" stroke="#2b2b2b" stroke-width="1.7"/><path d="M12.00,5.00L11.09,8.89L8.11,5.91z" fill="#2b2b2b"/><path d="M13.500,0v5M11,2.500h5" fill="none" stroke="#d84a2b" stroke-width="1.3"/></svg>
<svg class="i" style="left:474.5px;top:78.8px" width="16" height="16" viewBox="0 0 16 16"><rect x="0.700" y="1.200" width="5" height="13.600" fill="#fff" stroke="#3b6fb5" stroke-width="1.300"/><rect x="8.700" y="1.200" width="5" height="13.600" fill="#fff" stroke="#c7278d" stroke-width="1.300"/></svg>
<svg class="i" style="left:496.4px;top:78.8px" width="16" height="16" viewBox="0 0 16 16"><path d="M0.500,5l4,-4.500h11l-4,4.500z" fill="#3f7fc4"/><path d="M11.500,5l4,-4.500v10.500l-4,5z" fill="#c4277f"/><path d="M11,5.500v10" fill="none" stroke="#fff" stroke-width="0.8"/><path d="M2.500,8c.5,3 2.500,5 5,6" fill="none" stroke="#2b2b2b" stroke-width="1.5"/><path d="M9.500,15.500l-4.500,-.5l2.500,-3.500z" fill="#2b2b2b"/></svg>
<div class="a" style="left:519px;top:75.8px;width:1px;height:22px;background:#cfcfcf;"></div>
<svg class="i" style="left:528px;top:78.8px" width="16" height="16" viewBox="0 0 16 16"><path d="M1,6.500h4.500c2,0 2.500,-1 2.500,-2.500v-4" fill="none" stroke="#3b6fb5" stroke-width="1.2"/><path d="M1.500,15.500h9.500c3.500,0 5,-2 5,-5v-10" fill="none" stroke="#c7278d" stroke-width="1.2"/><path d="M6,5L10.6716,9.67157" fill="none" stroke="#2b2b2b" stroke-width="1.8"/><path d="M13.50,12.50L8.92,11.43L12.43,7.92z" fill="#2b2b2b"/></svg>
<svg class="a" style="left:549.3px;top:85.8px" width="6.4" height="3.6" viewBox="0 0 6.4 3.6"><path d="M0,0H6.4L3.2,3.6Z" fill="#6e6e6e"/></svg>
<svg class="i" style="left:561.3px;top:78.8px" width="16" height="16" viewBox="0 0 16 16"><rect x="0.7" y="0.7" width="3" height="3" fill="#fff" stroke="#c7278d" stroke-width="1.100"/><rect x="6" y="0.7" width="3" height="3" fill="#fff" stroke="#c7278d" stroke-width="1.100"/><rect x="11.3" y="0.7" width="3" height="3" fill="#fff" stroke="#c7278d" stroke-width="1.100"/><rect x="0.7" y="6" width="3" height="3" fill="#fff" stroke="#c7278d" stroke-width="1.100"/><rect x="6" y="6" width="3" height="3" fill="#fff" stroke="#c7278d" stroke-width="1.100"/><rect x="11.3" y="6" width="3" height="3" fill="#fff" stroke="#c7278d" stroke-width="1.100"/><rect x="0.7" y="11.3" width="3" height="3" fill="#fff" stroke="#3b6fb5" stroke-width="1.100"/><rect x="6" y="11.3" width="3" height="3" fill="#fff" stroke="#c7278d" stroke-width="1.100"/><rect x="11.3" y="11.3" width="3" height="3" fill="#fff" stroke="#c7278d" stroke-width="1.100"/></svg>
<svg class="i" style="left:585px;top:78.8px" width="16" height="16" viewBox="0 0 16 16"><rect x="0.700" y="3.200" width="14.600" height="9.600" fill="#fff" stroke="#c7278d" stroke-width="1.300"/><path d="M5.500,3.200h-4.800v9.600h4.800" fill="#fff" stroke="#3b6fb5" stroke-width="1.3"/><path d="M5.500,3.200v9.600" fill="none" stroke="#3b6fb5" stroke-width="1.3"/><path d="M6.500,8h4" fill="none" stroke="#2b2b2b" stroke-width="2.2"/><path d="M9.500,4.800l4.500,3.200l-4.500,3.200z" fill="#2b2b2b"/></svg>
<svg class="a" style="left:606px;top:85.8px" width="6.4" height="3.6" viewBox="0 0 6.4 3.6"><path d="M0,0H6.4L3.2,3.6Z" fill="#6e6e6e"/></svg>
<svg class="a" style="left:621px;top:79.5px" width="2" height="16"><rect x="0" y="0" width="2" height="2" fill="#bdbdbd"/><rect x="0" y="4" width="2" height="2" fill="#bdbdbd"/><rect x="0" y="8" width="2" height="2" fill="#bdbdbd"/><rect x="0" y="12" width="2" height="2" fill="#bdbdbd"/></svg>
<svg class="i" style="left:630.5px;top:78.8px" width="16" height="16" viewBox="0 0 16 16"><path d="M2,0.500v14.500" fill="none" stroke="#2b2b2b" stroke-width="1.1"/><path d="M2,0l-1.800,3.200h3.600zM2,15.500l-1.800,-3.200h3.600z" fill="#2b2b2b"/><circle cx="9.500" cy="5.500" r="4.300" fill="#f5c81e"/><path d="M7.200,7.500h4.600l-.8,4h-3z" fill="#f5c81e"/><path d="M8,12.500h3l-1.500,2.200z" fill="#555"/></svg>
<svg class="i" style="left:652px;top:78.8px" width="16" height="16" viewBox="0 0 16 16"><rect x="6.500" y="1.200" width="9" height="6" fill="#fff" stroke="#555" stroke-width="1"/><path d="M8.300,3.300h5.500M8.300,5.200h5.500" fill="none" stroke="#777" stroke-width="0.9"/><path d="M8.5,7L3.41815,11.7642" fill="none" stroke="#2b2b2b" stroke-width="1.5"/><path d="M0.50,14.50L1.72,9.95L5.11,13.57z" fill="#2b2b2b"/></svg>
<div class="a" style="left:675px;top:75.8px;width:1px;height:22px;background:#cfcfcf;"></div>
<svg class="i" style="left:684px;top:78.8px" width="16" height="16" viewBox="0 0 16 16"><path d="M1.5,3.5v10M15.5,3.5v10M1.5,8.5h14" fill="none" stroke="#2b2b2b" stroke-width="1.1"/><path d="M1.5,8.5l3,-1.600v3.200zM15.5,8.5l-3,-1.600v3.200z" fill="#2b2b2b"/></svg>
<svg class="a" style="left:705.3px;top:85.8px" width="6.4" height="3.6" viewBox="0 0 6.4 3.6"><path d="M0,0H6.4L3.2,3.6Z" fill="#6e6e6e"/></svg>
<svg class="i" style="left:719.5px;top:78.8px" width="16" height="16" viewBox="0 0 16 16"><path d="M4,2v11M12,2v11" fill="none" stroke="#2b2b2b" stroke-width="1"/><path d="M4,0.500l-1.500,3h3zM12,0.500l-1.500,3h3z" fill="#2b2b2b"/><rect x="2.700" y="12.500" width="2.600" height="2.600" fill="#fff" stroke="#222" stroke-width=".9"/><rect x="10.700" y="12.500" width="2.600" height="2.600" fill="#fff" stroke="#222" stroke-width=".9"/></svg>
<svg class="a" style="left:740.1px;top:85.8px" width="6.4" height="3.6" viewBox="0 0 6.4 3.6"><path d="M0,0H6.4L3.2,3.6Z" fill="#6e6e6e"/></svg>
<div class="a" style="left:752.9px;top:75.8px;width:1px;height:22px;background:#cfcfcf;"></div>
<svg class="i" style="left:762px;top:78.8px" width="16" height="16" viewBox="0 0 16 16"><defs><pattern id="ck" x="1" y="1" width="4" height="4" patternUnits="userSpaceOnUse"><rect width="4" height="4" fill="#fafafa"/><rect width="2" height="2" fill="#4c4c4c"/><rect x="2" y="2" width="2" height="2" fill="#4c4c4c"/></pattern></defs><rect x="1" y="1" width="14" height="14" fill="url(#ck)" shape-rendering="crispEdges"/></svg>
<svg class="a" style="left:783.1px;top:85.8px" width="6.4" height="3.6" viewBox="0 0 6.4 3.6"><path d="M0,0H6.4L3.2,3.6Z" fill="#6e6e6e"/></svg>
<svg class="a" style="left:798px;top:79.5px" width="2" height="16"><rect x="0" y="0" width="2" height="2" fill="#bdbdbd"/><rect x="0" y="4" width="2" height="2" fill="#bdbdbd"/><rect x="0" y="8" width="2" height="2" fill="#bdbdbd"/><rect x="0" y="12" width="2" height="2" fill="#bdbdbd"/></svg>
<svg class="i" style="left:806.7px;top:78.8px" width="16" height="16" viewBox="0 0 16 16"><rect x="2" y="2" width="12" height="12" fill="#e9c47f"/><path d="M8,2v12M2,8h12" fill="none" stroke="#9a9a9a" stroke-width="0.9"/><path d="M2,0.300v15.400M14,0.300v15.400M0.300,2h15.400M0.300,14h15.400" fill="none" stroke="#3f78bd" stroke-width="1.2"/></svg>
<svg class="i" style="left:828.6px;top:78.8px" width="16" height="16" viewBox="0 0 16 16"><rect x="1.400" y="0.900" width="13.100" height="13" fill="#e9c47f"/><path d="M8,1v13" fill="none" stroke="#9a9a9a" stroke-width="0.9"/><path d="M1.400,1.500h13.100M1.400,5.300h13.100M1.400,9.600h13.100M1.400,13.400h13.100" fill="none" stroke="#3f78bd" stroke-width="1.2"/></svg>
<svg class="i" style="left:850.5px;top:78.8px" width="16" height="16" viewBox="0 0 16 16"><path d="M1,15.500c1,-9 3.500,-14.500 7,-14.500s6,5.500 7,14.500z" fill="#e9c47f"/><path d="M8,1v14.500" fill="none" stroke="#6f93c4" stroke-width="0.9"/><path d="M1,15.500c1,-9 3.500,-14.500 7,-14.500" fill="none" stroke="#3f78bd" stroke-width="1.2"/><path d="M8,1c3.500,0 6,5.500 7,14.500" fill="none" stroke="#d84a2b" stroke-width="1.2"/></svg>
<svg class="i" style="left:873px;top:78.8px" width="16" height="16" viewBox="0 0 16 16"><path d="M0.800,4c.5,-3 3.500,-4 5.500,-2.500l9.500,9c-2.500,-.3 -4.500,1.700 -4.800,4.700l-9.200,-8c-1,-1 -1.200,-2 -1,-3.200z" fill="#e9c47f"/><path d="M6.300,1.500l9.500,9M1.800,7.200l9.200,8" fill="none" stroke="#3f78bd" stroke-width="1.1"/><path d="M3.800,3.500l9.300,8.500" fill="none" stroke="#3f78bd" stroke-width="0.9"/><path d="M1.800,7.200c-1.500,-1.500 -1.200,-3.500 0,-4.800s3,-1.700 4.500,-.9" fill="none" stroke="#3f78bd" stroke-width="1.1"/><path d="M4.500,9.500c-.3,-2.500 1.500,-4.500 4.300,-4.700" fill="none" stroke="#3f78bd" stroke-width="0.9"/><path d="M11,15.200c0,-3 2.200,-5 4.800,-4.700" fill="none" stroke="#d84a2b" stroke-width="1.3"/><path d="M1,7c-.3,-.8 -.4,-1.700 -.2,-2.600" fill="none" stroke="#d84a2b" stroke-width="1.1"/></svg>
<svg class="i" style="left:896.8px;top:78.8px" width="16" height="16" viewBox="0 0 16 16"><path d="M0.700,3v10a5.300,2.300 0 0 0 10.600,0v-10z" fill="#e9c47f"/><ellipse cx="6" cy="3" rx="5.300" ry="2.300" fill="#e9c47f" stroke="#3f78bd" stroke-width="1.100"/><path d="M0.700,3v10M11.300,3v10M6,5.300v10M0.700,6.500a5.300,2.300 0 0 0 10.600,0M0.700,9.800a5.300,2.300 0 0 0 10.600,0" fill="none" stroke="#3f78bd" stroke-width="1"/><path d="M3,4.800h6" fill="none" stroke="#3f78bd" stroke-width="1.4"/><ellipse cx="6" cy="13" rx="5.300" ry="2.300" fill="none" stroke="#d84a2b" stroke-width="1.200"/><path d="M13.700,15v-11" fill="none" stroke="#2b2b2b" stroke-width="2.2"/><path d="M13.700,0.300l-3.200,4.700h6.400z" fill="#2b2b2b"/></svg>
<svg class="a" style="left:918.1px;top:85.8px" width="6.4" height="3.6" viewBox="0 0 6.4 3.6"><path d="M0,0H6.4L3.2,3.6Z" fill="#6e6e6e"/></svg>
<div class="a" style="left:930.9px;top:75.8px;width:1px;height:22px;background:#cfcfcf;"></div>
<svg class="i" style="left:938px;top:78.8px" width="16" height="16" viewBox="0 0 16 16"><path d="M1,5l5,-4.500l9.500,7l-5.500,5z" fill="#e9c47f" stroke="#3b6fb5" stroke-width="1"/><path d="M3.500,2.800l9.500,7M8,1.500l-5,4.500M11.500,4l-5,4.500" fill="none" stroke="#3b6fb5" stroke-width="0.9"/><path d="M6,11l5,-3l4.500,4l-5,3.500z" fill="#e4e4e4" stroke="#aaa" stroke-width="0.8"/><path d="M0,0v10l2.400,-2.200l1.800,4l1.700,-.8l-1.800,-3.900h3.300z" fill="#2b2b2b" transform="translate(6.5 5.5) scale(0.7)"/></svg>
<svg class="i" style="left:960px;top:78.8px" width="16" height="16" viewBox="0 0 16 16"><circle cx="5" cy="4.500" r="4" fill="#e6e6e6" stroke="#999" stroke-width=".9"/><path d="M1.500,9c2,-5 7,-7 13.500,-5l-1.500,4c-4,-1 -7,.5 -8,5.500z" fill="#e9c47f" stroke="#3b6fb5" stroke-width="1.1"/><path d="M5,5.500l2.500,4M9.500,3.700l1,4.300" fill="none" stroke="#3b6fb5" stroke-width="0.9"/><path d="M8.500,11c1,-2 3,-3 6.500,-2.500c-2,1.500 -3,3.500 -2.500,6.500c-1,-2 -2.500,-3.500 -4,-4z" fill="#f4f4f4" stroke="#999" stroke-width="0.9"/></svg>
<svg class="i" style="left:982px;top:78.8px" width="16" height="16" viewBox="0 0 16 16"><path d="M0.700,5l4.800,-3.500l9.800,1.500v8l-4.800,4l-9.800,-2z" fill="#f2f6fb" stroke="#355f92" stroke-width="1.2"/><path d="M0.700,5l9.800,2l4.800,-4M10.500,7v8M0.700,9l9.800,2l4.800,-4M4,5.700v8M7.300,6.300v8M3,3.300l9.800,1.700M12.800,5v8" fill="none" stroke="#355f92" stroke-width="1"/></svg>
<div class="a" style="left:1004.9px;top:75.8px;width:1px;height:22px;background:#cfcfcf;"></div>
<svg class="i" style="left:1014px;top:78.8px" width="16" height="16" viewBox="0 0 16 16"><path d="M1,11l10,-3.500l4.500,3.500l-10,4.500z" fill="#eee" stroke="#aaa" stroke-width="0.9"/><path d="M3.500,1.500c3,-1 6,-1 8.500,0v9c-2.500,1 -5.500,1 -8.500,0z" fill="#e9c47f" stroke="#3b6fb5" stroke-width="1.1"/><path d="M6.300,1v10M9.200,1v10M3.500,6h8.500" fill="none" stroke="#3b6fb5" stroke-width="0.9"/></svg>
<svg class="a" style="left:1035.1px;top:85.8px" width="6.4" height="3.6" viewBox="0 0 6.4 3.6"><path d="M0,0H6.4L3.2,3.6Z" fill="#6e6e6e"/></svg>
<svg class="i" style="left:1049px;top:78.8px" width="16" height="16" viewBox="0 0 16 16"><rect x="0.700" y="0.700" width="14.600" height="14.600" fill="#fff" stroke="#6a6a6a" stroke-width="1.300"/><path d="M0.700,5.600h14.600M0.700,10.400h14.600M5.600,0.700v14.600M10.400,0.700v14.600" fill="none" stroke="#6a6a6a" stroke-width="1.1"/><path d="M0.800,3.800l3,-3l11.400,8.200v3l-3.200,3.200z" fill="#e9c47f" stroke="#3f78bd" stroke-width="1"/><path d="M2.300,2.300l11.400,11M4.500,6l3.500,-3.300M8,9.500l3.500,-3.300" fill="none" stroke="#3f78bd" stroke-width="0.9"/></svg>
<svg class="a" style="left:1070.1px;top:85.8px" width="6.4" height="3.6" viewBox="0 0 6.4 3.6"><path d="M0,0H6.4L3.2,3.6Z" fill="#6e6e6e"/></svg>
<svg class="i" style="left:1083.5px;top:78.8px" width="16" height="16" viewBox="0 0 16 16"><path d="M4,0.500h8M4,3h8M4,0.500v5M8,0.500v5M12,0.500v5" fill="none" stroke="#999" stroke-width="1"/><path d="M4,5.500h8l3.500,7h-15z" fill="#e9c47f" stroke="#3b6fb5" stroke-width="1"/><path d="M2.500,9h11M6.500,5.500l-1.500,7M9.500,5.500l1.500,7" fill="none" stroke="#3b6fb5" stroke-width="0.9"/><path d="M0.500,12.500h15M0.500,15h15M0.500,12.500v2.500M5.500,12.500v2.500M10.500,12.500v2.500M15.500,12.500v2.500" fill="none" stroke="#999" stroke-width="1"/></svg>
<svg class="a" style="left:1105px;top:85.8px" width="6.4" height="3.6" viewBox="0 0 6.4 3.6"><path d="M0,0H6.4L3.2,3.6Z" fill="#6e6e6e"/></svg>
<svg class="a" style="left:7px;top:105px" width="2" height="20"><rect x="0" y="0" width="2" height="2" fill="#bdbdbd"/><rect x="0" y="4" width="2" height="2" fill="#bdbdbd"/><rect x="0" y="8" width="2" height="2" fill="#bdbdbd"/><rect x="0" y="12" width="2" height="2" fill="#bdbdbd"/><rect x="0" y="16" width="2" height="2" fill="#bdbdbd"/></svg>
<svg class="i" style="left:532.5px;top:107px" width="16" height="16" viewBox="0 0 16 16"><path d="M2.500,0.500v5M0,3h5" fill="none" stroke="#666" stroke-width="1"/><path d="M4,0L0,6h2.6L1,11L6.5,4H3.6L5.5,0z" fill="#ecc96e" transform="translate(5.5 2.5) scale(1.15)"/></svg>
<svg class="i" style="left:555px;top:107px" width="16" height="16" viewBox="0 0 16 16"><path d="M2.500,0.500v5M0,3h5" fill="none" stroke="#666" stroke-width="1"/><circle cx="9.5" cy="10" r="3.3" fill="none" stroke="#e0c9a0" stroke-width="2.200"/><rect x="-1.100" y="-1.100" width="2.200" height="2.400" fill="#e0c9a0" transform="translate(14.3 10) rotate(90)"/><rect x="-1.100" y="-1.100" width="2.200" height="2.400" fill="#e0c9a0" transform="translate(12.8941 13.3941) rotate(135)"/><rect x="-1.100" y="-1.100" width="2.200" height="2.400" fill="#e0c9a0" transform="translate(9.5 14.8) rotate(180)"/><rect x="-1.100" y="-1.100" width="2.200" height="2.400" fill="#e0c9a0" transform="translate(6.10589 13.3941) rotate(225)"/><rect x="-1.100" y="-1.100" width="2.200" height="2.400" fill="#e0c9a0" transform="translate(4.7 10) rotate(270)"/><rect x="-1.100" y="-1.100" width="2.200" height="2.400" fill="#e0c9a0" transform="translate(6.10589 6.60589) rotate(315)"/><rect x="-1.100" y="-1.100" width="2.200" height="2.400" fill="#e0c9a0" transform="translate(9.5 5.2) rotate(360)"/><rect x="-1.100" y="-1.100" width="2.200" height="2.400" fill="#e0c9a0" transform="translate(12.8941 6.60589) rotate(405)"/></svg>
<svg class="i" style="left:577.5px;top:107px" width="16" height="16" viewBox="0 0 16 16"><path d="M0.500,0.500l15,15M15.500,0.500l-15,15" fill="none" stroke="#a8d0c0" stroke-width="1"/><path d="M8,5.500v5M5.500,8h5" fill="none" stroke="#666" stroke-width="1"/></svg>
<svg class="a" style="left:598.8px;top:114px" width="6.4" height="3.6" viewBox="0 0 6.4 3.6"><path d="M0,0H6.4L3.2,3.6Z" fill="#c4c4c4"/></svg>
<svg class="i" style="left:611px;top:107px" width="16" height="16" viewBox="0 0 16 16"><circle cx="8" cy="8" r="7.500" fill="#3467ae"/><circle cx="8" cy="8" r="6" fill="none" stroke="#fff" stroke-width=".9"/><text x="5" y="12" font-size="11" font-weight="bold" font-family="Liberation Sans" fill="#fff">?</text></svg>
<svg class="a" style="left:640.4px;top:105px" width="2" height="20"><rect x="0" y="0" width="2" height="2" fill="#bdbdbd"/><rect x="0" y="4" width="2" height="2" fill="#bdbdbd"/><rect x="0" y="8" width="2" height="2" fill="#bdbdbd"/><rect x="0" y="12" width="2" height="2" fill="#bdbdbd"/><rect x="0" y="16" width="2" height="2" fill="#bdbdbd"/></svg>
<svg class="i" style="left:649.3px;top:107px" width="16" height="16" viewBox="0 0 16 16"><path d="M1,1h8v6h6v8h-8v-6h-6z" fill="#edbd78" stroke="#222" stroke-width="1.2" stroke-dasharray="2 1.300"/></svg>
<div class="a" style="left:671.8px;top:104px;width:1px;height:22px;background:#cfcfcf;"></div>
<svg class="i" style="left:679.5px;top:107px" width="16" height="16" viewBox="0 0 16 16"><path d="M1,1h9v9h-9z" fill="none" stroke="#aaa" stroke-width="1.3"/><path d="M6,6h9v9h-9z" fill="none" stroke="#aaa" stroke-width="1.3"/><rect x="3.800" y="3.800" width="7.500" height="7.500" fill="#edbd78" stroke="#222" stroke-width="1.100" stroke-dasharray="1.800 1.200"/></svg>
<div class="a" style="left:701.5px;top:104px;width:1px;height:22px;background:#cfcfcf;"></div>
<svg class="i" style="left:708.8px;top:107px" width="16" height="16" viewBox="0 0 16 16"><path d="M3.500,6a5,5 0 0 1 7,-3" fill="none" stroke="#3f8f70" stroke-width="1.4"/><path d="M12.500,11a5,5 0 0 1 -7,3" fill="none" stroke="#3f8f70" stroke-width="1.4"/><path d="M5,11.500l.5,4l3,-2.500z" fill="#3f8f70"/><path d="M11,4.500l-.5,-4l-3,2.500z" fill="#3f8f70"/><path d="M0,0v10l2.400,-2.200l1.800,4l1.700,-.8l-1.800,-3.900h3.300z" fill="#2b2b2b" transform="translate(0.5 6) scale(0.95)"/><path d="M0,0v10l2.400,-2.200l1.800,4l1.700,-.8l-1.800,-3.900h3.300z" fill="#fff" stroke="#222" stroke-width=".6" transform="translate(9.5 0.5) scale(0.85)"/></svg>
<div class="a" style="left:731.9px;top:104px;width:1px;height:22px;background:#cfcfcf;"></div>
<svg class="i" style="left:741.3px;top:107px" width="16" height="16" viewBox="0 0 16 16"><rect x="1.500" y="1.500" width="13" height="13" fill="#edc07c" stroke="#222" stroke-width="1.300" stroke-dasharray="2.200 1.400"/></svg>
<svg class="a" style="left:762.4px;top:114px" width="6.4" height="3.6" viewBox="0 0 6.4 3.6"><path d="M0,0H6.4L3.2,3.6Z" fill="#6e6e6e"/></svg>
<div class="a" style="left:774.8px;top:104px;width:1px;height:22px;background:#cfcfcf;"></div>
<svg class="i" style="left:784px;top:107px" width="16" height="16" viewBox="0 0 16 16"><path d="M1.5,14.5L12.318,3.68198" fill="none" stroke="#2b2b2b" stroke-width="1.5"/><path d="M15.50,0.50L14.29,5.65L10.35,1.71z" fill="#2b2b2b"/><circle cx="1.800" cy="14.200" r="1.600" fill="#2b2b2b"/></svg>
<svg class="a" style="left:805px;top:114px" width="6.4" height="3.6" viewBox="0 0 6.4 3.6"><path d="M0,0H6.4L3.2,3.6Z" fill="#6e6e6e"/></svg>
<svg class="i" style="left:818.5px;top:107px" width="16" height="16" viewBox="0 0 16 16"><path d="M0,0v10l2.400,-2.200l1.800,4l1.700,-.8l-1.800,-3.900h3.300z" fill="#8a8a8a" transform="translate(2 1) scale(1.25)"/></svg>
<svg class="i" style="left:839px;top:107px" width="16" height="16" viewBox="0 0 16 16"><g opacity="1"><path d="M1,4.500l7,-3.500l7,3.500l-7,3.500z" fill="#f3e3c4"/><path d="M1,4.500l7,3.500v8l-7,-3.500z" fill="#efd9b0"/><path d="M8,8l7,-3.500v8l-7,3.500z" fill="#e3c898"/></g><circle cx="12" cy="12" r="4" fill="#a5cdbf"/><path d="M10,12l1.500,1.700l2.800,-3.400" fill="none" stroke="#fff" stroke-width="1.3"/></svg>
<div class="a" style="left:862.1px;top:104px;width:1px;height:22px;background:#cfcfcf;"></div>
<svg class="i" style="left:869.5px;top:107px" width="16" height="16" viewBox="0 0 16 16"><g opacity="1"><path d="M1,4.500l7,-3.500l7,3.500l-7,3.500z" fill="#f3e3c4"/><path d="M1,4.500l7,3.500v8l-7,-3.500z" fill="#efd9b0"/><path d="M8,8l7,-3.500v8l-7,3.500z" fill="#e3c898"/></g><path d="M8,8v8" fill="none" stroke="#8fb0d8" stroke-width="2"/></svg>
<svg class="i" style="left:891px;top:107px" width="16" height="16" viewBox="0 0 16 16"><g opacity="1"><path d="M1,4.500l7,-3.500l7,3.500l-7,3.500z" fill="#f3e3c4"/><path d="M1,4.500l7,3.500v8l-7,-3.500z" fill="#f0dcb6"/><path d="M8,8l7,-3.500v8l-7,3.500z" fill="#a9b9d0"/></g></svg>
<svg class="i" style="left:913px;top:107px" width="16" height="16" viewBox="0 0 16 16"><g opacity="1"><path d="M1,4.500l7,-3.500l7,3.500l-7,3.500z" fill="#bcd6f0"/><path d="M1,4.500l7,3.500v8l-7,-3.500z" fill="#b3cfee"/><path d="M8,8l7,-3.500v8l-7,3.500z" fill="#9fb4d0"/></g></svg>
<div class="a" style="left:935.9px;top:104px;width:1px;height:22px;background:#cfcfcf;"></div>
<svg class="i" style="left:943px;top:107px" width="16" height="16" viewBox="0 0 16 16"><g opacity="1"><path d="M1,4.500l7,-3.500l7,3.500l-7,3.500z" fill="#f6e8d0"/><path d="M1,4.500l7,3.500v8l-7,-3.500z" fill="#f3e3c4"/><path d="M8,8l7,-3.500v8l-7,3.500z" fill="#a8c4e4"/></g><path d="M8,8l7,-3.500v4l-7,3.500z" fill="#f6e8d0"/><path d="M14.5,11.5L11.4122,13.5585" fill="none" stroke="#777" stroke-width="1.3"/><path d="M8.50,15.50L10.21,11.75L12.62,15.36z" fill="#777"/></svg>
<svg class="i" style="left:964.5px;top:107px" width="16" height="16" viewBox="0 0 16 16"><path d="M3,5.500c1,-3.500 5.500,-4.500 9,-2" fill="none" stroke="#3f8f78" stroke-width="2"/><path d="M0.500,1l5.500,1l-3.500,4.500z" fill="#3f8f78"/><path d="M0,0v10l2.400,-2.200l1.800,4l1.700,-.8l-1.800,-3.900h3.300z" fill="#2b2b2b" transform="translate(7 5) scale(1.05)"/></svg>
<div class="a" style="left:988.1px;top:104px;width:1px;height:22px;background:#cfcfcf;"></div>
<svg class="i" style="left:995px;top:107px" width="16" height="16" viewBox="0 0 16 16"><path d="M0,0v10l2.400,-2.200l1.800,4l1.700,-.8l-1.800,-3.900h3.300z" fill="#2b2b2b" transform="translate(0.5 0) scale(0.95)"/><rect x="7" y="6.500" width="8" height="9" fill="#fff" stroke="#c79a4a" stroke-width="1.300"/><rect x="9.300" y="5.300" width="3.400" height="2" fill="#666"/><path d="M8.800,11l1.800,2l3,-4" fill="none" stroke="#3f8f70" stroke-width="1.5"/></svg>
<div class="a" style="left:1017.9px;top:104px;width:1px;height:22px;background:#cfcfcf;"></div>
<svg class="i" style="left:1024.8px;top:107px" width="16" height="16" viewBox="0 0 16 16"><circle cx="8" cy="8" r="7.500" fill="#eba89e"/><circle cx="8" cy="8" r="6" fill="none" stroke="#fff" stroke-width=".9"/><path d="M3.500,3.500l9,9" fill="none" stroke="#fff" stroke-width="2.2"/></svg>
<svg class="i" style="left:1046.8px;top:107px" width="16" height="16" viewBox="0 0 16 16"><circle cx="8" cy="8" r="7.500" fill="#a9cfc0"/><circle cx="8" cy="8" r="6" fill="none" stroke="#fff" stroke-width=".9"/><path d="M4.500,8.500l2.500,2.800l4.800,-6" fill="none" stroke="#fff" stroke-width="2"/></svg>
<svg class="i" style="left:1069px;top:107px" width="16" height="16" viewBox="0 0 16 16"><circle cx="8" cy="8" r="7.500" fill="#3467ae"/><circle cx="8" cy="8" r="6" fill="none" stroke="#fff" stroke-width=".9"/><text x="5" y="12" font-size="11" font-weight="bold" font-family="Liberation Sans" fill="#fff">?</text></svg>
<svg class="a" style="left:1100.4px;top:105px" width="2" height="20"><rect x="0" y="0" width="2" height="2" fill="#bdbdbd"/><rect x="0" y="4" width="2" height="2" fill="#bdbdbd"/><rect x="0" y="8" width="2" height="2" fill="#bdbdbd"/><rect x="0" y="12" width="2" height="2" fill="#bdbdbd"/><rect x="0" y="16" width="2" height="2" fill="#bdbdbd"/></svg>
<svg class="i" style="left:1109px;top:107px" width="16" height="16" viewBox="0 0 16 16"><path d="M0,6.300L6.500,0L16,8.800V16H9.500L0,13.200z" fill="#dbb468"/><path d="M0,7.500L9.500,13V16L0,13.200z" fill="#ecc981"/><path d="M3.300,2.600c2.500,2 2.500,4.500 3.500,6s2.500,2.500 3,3.800M5.600,1.300c2.500,2 2.500,4.500 3.500,6s2.500,2.500 3,3.500" fill="none" stroke="#2f5a94" stroke-width="1.3" stroke-dasharray="1.600 .8"/><path d="M9.700,16.500a6.300,6.300 0 0 1 6.800,-6.800v6.800z" fill="#4f9a80" stroke="#f0f0f0" stroke-width="0.8"/></svg>
<svg class="i" style="left:1131px;top:107px" width="16" height="16" viewBox="0 0 16 16"><path d="M0.5,5.5L6.5,2L12.5,5.5L6.5,8.6z" fill="#f6f8f8"/><path d="M0.5,5.5L6.5,8.6V15.6L0.5,12.7z" fill="#e6ecec"/><path d="M6.5,8.6L12.5,5.5V12.7L6.5,15.6z" fill="#eef2f2"/><path d="M6.5,2V9.3M0.5,12.7L6.5,9.3L12.5,12.7" fill="none" stroke="#cfd9e2" stroke-width="0.8"/><path d="M0.5,5.5L6.5,2L12.5,5.5L6.5,8.6zM0.5,5.5L6.5,8.6V15.6L0.5,12.7zM6.5,8.6L12.5,5.5V12.7L6.5,15.6z" fill="none" stroke="#666a6e" stroke-width="1.1"/><path d="M8.6,0.2L16,3.4L9,6.2z" fill="#f0f0f0"/><path d="M9.3,0.6L15.4,3.1L9.6,5.6" fill="none" stroke="#355f92" stroke-width="1.2"/><path d="M11.3,1.6V4.7" fill="none" stroke="#355f92" stroke-width="1.1"/><path d="M9.6,5.6L8.8,7" fill="none" stroke="#355f92" stroke-width="1"/></svg>
<svg class="i" style="left:31.7px;top:169px" width="16" height="16" viewBox="0 0 16 16"><path d="M0.500,0.500l8,5l-8,5z" fill="#9fcab8"/><path d="M0,0v10l2.400,-2.200l1.800,4l1.700,-.8l-1.800,-3.900h3.300z" fill="#8c8c8c" transform="translate(10 5.5) scale(0.9)"/></svg>
<svg class="i" style="left:54px;top:169px" width="16" height="16" viewBox="0 0 16 16"><path d="M0.500,1l7,7M7.500,1l-7,7" fill="none" stroke="#e8988a" stroke-width="1.8"/><path d="M0,0v10l2.400,-2.200l1.800,4l1.700,-.8l-1.800,-3.900h3.300z" fill="#8c8c8c" transform="translate(9.8 5.5) scale(0.9)"/></svg>
<div class="a" style="left:77px;top:166.5px;width:1px;height:21px;background:#cfcfcf;"></div>
<svg class="i" style="left:84.5px;top:169px" width="16" height="16" viewBox="0 0 16 16"><g transform="translate(0.5 0)"><rect x="0" y="0.300" width="5.800" height="2.200" fill="#c4c4c4"/><path d="M0.400,2.500h5l-.9,3.200h-3.200z" fill="#9a9a9a"/><rect x="2.200" y="5.500" width="1.700" height="9.500" fill="#e8c660"/></g><path d="M7.500,7.500l8,4.200l-8,4.200z" fill="#9fcab8"/></svg>
<svg class="i" style="left:106.5px;top:169px" width="16" height="16" viewBox="0 0 16 16"><g transform="translate(0.5 0)"><rect x="0" y="0.300" width="5.800" height="2.200" fill="#c4c4c4"/><path d="M0.400,2.500h5l-.9,3.200h-3.200z" fill="#9a9a9a"/><rect x="2.200" y="5.500" width="1.700" height="9.500" fill="#e8c660"/></g><path d="M8,8l7,7M15,8l-7,7" fill="none" stroke="#e8988a" stroke-width="1.8"/></svg>
<div class="a" style="left:128.9px;top:166.5px;width:1px;height:21px;background:#cfcfcf;"></div>
<svg class="i" style="left:137px;top:169px" width="16" height="16" viewBox="0 0 16 16"><rect x="0" y="0" width="15" height="15" fill="#8ea5c2"/><path d="M0,3.5c2.500,-2.200 5,-2.200 7.500,0s5,2.200 7.500,0" fill="none" stroke="#fff" stroke-width="1.3"/><path d="M0,7.5c2.500,-2.200 5,-2.200 7.500,0s5,2.200 7.500,0" fill="none" stroke="#fff" stroke-width="1.3"/><path d="M0,11.5c2.500,-2.200 5,-2.200 7.500,0s5,2.200 7.500,0" fill="none" stroke="#fff" stroke-width="1.3"/></svg>
<svg class="i" style="left:158px;top:169px" width="16" height="16" viewBox="0 0 16 16"><path d="M0,4l4.500,-3l5,2l-4.500,3z" fill="#eadbb8"/><path d="M0,4l5,2v6l-5,-2.500z" fill="#e6d2a8"/><path d="M5,6l4.500,-3v6l-4.500,3z" fill="#d9c08c"/><rect x="8" y="7.500" width="7.500" height="8" fill="#fff" stroke="#d8b77a" stroke-width="1.200"/><rect x="10" y="6.300" width="3.500" height="2" fill="#999"/><path d="M9.800,11.500l1.600,1.800l2.800,-3.600" fill="none" stroke="#9fcab8" stroke-width="1.4"/></svg>
<svg class="i" style="left:180px;top:169px" width="16" height="16" viewBox="0 0 16 16"><rect x="0" y="0" width="15" height="14.500" fill="#8ea5c2"/><path d="M0,3.5c2.500,-2.200 5,-2.200 7.500,0s5,2.200 7.500,0" fill="none" stroke="#fff" stroke-width="1.3"/><path d="M0,7.5c2.500,-2.200 5,-2.200 7.500,0s5,2.200 7.500,0" fill="none" stroke="#fff" stroke-width="1.3"/><path d="M0,11.5c2.500,-2.200 5,-2.200 7.500,0s5,2.200 7.500,0" fill="none" stroke="#fff" stroke-width="1.3"/><circle cx="12" cy="12" r="4.800" fill="#f0f0f0"/><circle cx="12" cy="12" r="2.3" fill="none" stroke="#d9b98a" stroke-width="2.200"/><rect x="-1.100" y="-1.100" width="2.200" height="2.400" fill="#d9b98a" transform="translate(15.8 12) rotate(90)"/><rect x="-1.100" y="-1.100" width="2.200" height="2.400" fill="#d9b98a" transform="translate(14.687 14.687) rotate(135)"/><rect x="-1.100" y="-1.100" width="2.200" height="2.400" fill="#d9b98a" transform="translate(12 15.8) rotate(180)"/><rect x="-1.100" y="-1.100" width="2.200" height="2.400" fill="#d9b98a" transform="translate(9.31299 14.687) rotate(225)"/><rect x="-1.100" y="-1.100" width="2.200" height="2.400" fill="#d9b98a" transform="translate(8.2 12) rotate(270)"/><rect x="-1.100" y="-1.100" width="2.200" height="2.400" fill="#d9b98a" transform="translate(9.31299 9.31299) rotate(315)"/><rect x="-1.100" y="-1.100" width="2.200" height="2.400" fill="#d9b98a" transform="translate(12 8.2) rotate(360)"/><rect x="-1.100" y="-1.100" width="2.200" height="2.400" fill="#d9b98a" transform="translate(14.687 9.31299) rotate(405)"/></svg>
<svg class="i" style="left:203.8px;top:169px" width="16" height="16" viewBox="0 0 16 16"><text x="0" y="13" font-size="13.500" font-family="Liberation Sans" fill="#8fb2dc" textLength="13" lengthAdjust="spacingAndGlyphs">G1</text></svg>
<svg class="i" style="left:225px;top:169px" width="16" height="16" viewBox="0 0 16 16"><g transform="translate(0 0)"><rect x="0" y="0.300" width="5.800" height="2.200" fill="#c4c4c4"/><path d="M0.400,2.500h5l-.9,3.200h-3.200z" fill="#9a9a9a"/><rect x="2.200" y="5.500" width="1.700" height="9.500" fill="#e8c660"/></g><path d="M5.500,11.500h6" fill="none" stroke="#e8988a" stroke-width="1.8"/><path d="M10.500,8.300l4.500,3.200l-4.500,3.200z" fill="#e8988a"/></svg>
<div class="a" style="left:246.8px;top:166.5px;width:1px;height:21px;background:#cfcfcf;"></div>
<svg class="i" style="left:254.5px;top:169px" width="16" height="16" viewBox="0 0 16 16"><path d="M1.500,14.500l9.500,-9.500l2.800,2.800l-9.500,9.500z" fill="#e8988a"/><path d="M9,3c2,-2.500 5,-2 5.500,.5" fill="none" stroke="#777" stroke-width="1"/><circle cx="4" cy="3.500" r="1.800" fill="#f2c230"/><path d="M4,0v7M0.500,3.500h7M1.500,1l5,5M6.500,1l-5,5" fill="none" stroke="#f2c230" stroke-width="0.8"/></svg>
<div class="a" style="left:276.9px;top:166.5px;width:1px;height:21px;background:#cfcfcf;"></div>
<svg class="i" style="left:284.2px;top:169px" width="16" height="16" viewBox="0 0 16 16"><circle cx="8" cy="8" r="7.500" fill="none" stroke="#a8cfc0" stroke-width="1"/><circle cx="8" cy="8" r="6" fill="#92a9cc"/><text x="5" y="12" font-size="11" font-weight="bold" font-family="Liberation Sans" fill="#fff">?</text></svg>
<svg class="i" style="left:32.5px;top:193.5px" width="16" height="16" viewBox="0 0 16 16"><path d="M4,7v-2.500a4,4 0 0 1 8,0v2.500" fill="none" stroke="#dcc8a0" stroke-width="2"/><rect x="2" y="7" width="12" height="8.500" rx="1" fill="#dcc8a0"/><path d="M8,9.500v3" fill="none" stroke="#fff" stroke-width="1.4"/></svg>
<svg class="i" style="left:54px;top:193.5px" width="16" height="16" viewBox="0 0 16 16"><path d="M0.500,4c2.500,-2.500 5,-2.500 7.500,0s5,2.500 7.500,0" fill="none" stroke="#6a8cb8" stroke-width="0.9"/><path d="M0.500,8.500c2.500,-2.500 5,-2.500 7.500,0s5,2.500 7.500,0" fill="none" stroke="#6a8cb8" stroke-width="0.9"/><path d="M0.500,13c2.500,-2.500 5,-2.500 7.500,0s5,2.500 7.500,0" fill="none" stroke="#6a8cb8" stroke-width="0.9"/></svg>
<svg class="i" style="left:76px;top:193.5px" width="16" height="16" viewBox="0 0 16 16"><path d="M3,15.500v-10a5,5 0 0 1 10,0v10l-2,-1.500l-1.500,1.500l-1.500,-1.500l-1.500,1.500l-1.500,-1.500z" fill="#c4c4c4"/><rect x="5.300" y="5" width="1.800" height="1.800" fill="#555"/><rect x="9" y="5" width="1.800" height="1.800" fill="#555"/><rect x="7.200" y="8.500" width="1.800" height="1.800" fill="#555"/></svg>
<div class="a" style="left:98.9px;top:191px;width:1px;height:21px;background:#cfcfcf;"></div>
<svg class="i" style="left:106.2px;top:193.5px" width="16" height="16" viewBox="0 0 16 16"><path d="M1.500,4h13l-6.500,8.500z" fill="#e8988a"/></svg>
<svg class="i" style="left:128px;top:193.5px" width="16" height="16" viewBox="0 0 16 16"><path d="M1.500,12.500h13l-6.500,-8.500z" fill="#e8988a"/></svg>
<svg class="i" style="left:150.5px;top:193.5px" width="16" height="16" viewBox="0 0 16 16"><path d="M12,3.500h-10v7.500h9" fill="none" stroke="#e8988a" stroke-width="2"/><path d="M10,7.500l5.500,3.500l-5.500,3.500z" fill="#e8988a"/></svg>
<svg class="i" style="left:172px;top:193.5px" width="16" height="16" viewBox="0 0 16 16"><path d="M2,6h12l-6,-6.500zM2,10h12l-6,6.500z" fill="#e8988a"/><path d="M0,8h16" fill="none" stroke="#e8988a" stroke-width="1.4"/></svg>
<div class="a" style="left:195px;top:191px;width:1px;height:21px;background:#cfcfcf;"></div>
<svg class="i" style="left:202px;top:193.5px" width="16" height="16" viewBox="0 0 16 16"><path d="M0.500,3.500c2.500,-2.500 5,-2.500 7.500,0s5,2.500 7.500,0" fill="none" stroke="#7c9cc4" stroke-width="1"/><path d="M0.500,7.500c2.500,-2.500 5,-2.500 7.500,0s5,2.500 7.500,0" fill="none" stroke="#b8b8b8" stroke-width="1"/><path d="M0.500,11.500c2.500,-2.500 5,-2.500 7.500,0s5,2.500 7.500,0" fill="none" stroke="#c8c8c8" stroke-width="1"/><path d="M0,0v10l2.400,-2.200l1.800,4l1.700,-.8l-1.800,-3.900h3.300z" fill="#777" transform="translate(8.5 5) scale(0.95)"/></svg>
<svg class="i" style="left:224px;top:193.5px" width="16" height="16" viewBox="0 0 16 16"><circle cx="6" cy="6" r="5.500" fill="none" stroke="#c4c4c4" stroke-width="1"/><rect x="6.500" y="7" width="9" height="8.500" fill="none" stroke="#e8988a" stroke-width="1.200"/></svg>
<svg class="i" style="left:246px;top:193.5px" width="16" height="16" viewBox="0 0 16 16"><path d="M0.500,15.500v-5.500h4.500v5.500M5,10h5.500" fill="none" stroke="#dcc090" stroke-width="1.2"/><rect x="10" y="1" width="5.500" height="1.600" fill="#c9c9c9"/><path d="M10.500,2.600h4.500l-1.300,2.500h-1.900z" fill="#c4c4c4"/><rect x="12" y="5" width="1.600" height="5" fill="#c4c4c4"/></svg>
<div class="a" style="left:269.1px;top:191px;width:1px;height:21px;background:#cfcfcf;"></div>
<svg class="i" style="left:276px;top:193.5px" width="16" height="16" viewBox="0 0 16 16"><rect x="0.500" y="0.500" width="13" height="2.800" fill="#b4b4b4"/><rect x="10.500" y="0.500" width="3" height="15" fill="#b4b4b4"/><rect x="0.500" y="13" width="13" height="2.500" fill="#a8a8a8"/><path d="M3.500,3.300h4.500l-1,3h-2.500z" fill="#9a9a9a"/><path d="M5.700,6.300v2.500" fill="none" stroke="#888" stroke-width="1.2"/><path d="M1.500,13l1.500,-3.500h5.500l1.500,3.500z" fill="#7fa8dc"/><rect x="12" y="6" width="4" height="1.500" fill="#c4c4c4"/><path d="M12.500,7.500h3l-.8,2h-1.400z" fill="#aaa"/><path d="M14,9.500v6" fill="none" stroke="#e8c660" stroke-width="1.3"/></svg>
<svg class="i" style="left:298px;top:193.5px" width="16" height="16" viewBox="0 0 16 16"><circle cx="5.500" cy="6" r="5" fill="#fff" stroke="#777" stroke-width="1.300"/><path d="M5.500,6v-5a5,5 0 0 0 -5,5zM5.500,6v5a5,5 0 0 0 5,-5z" fill="#666"/><path d="M9,14.500l5,-11l1.800,.8l-5,11z" fill="#e8c050"/><path d="M9,14.500l-.3,1.500l1.500,-.8z" fill="#555"/><path d="M14,3.500l.5,-1.200l1.800,.8l-.5,1.200z" fill="#d86a50"/></svg>
<svg class="a" style="left:0;top:216px" width="420" height="200" viewBox="0 216 420 200"><rect x="53.5" y="221.5" width="6.500" height="6" fill="#00e4f4" stroke="#000090" stroke-width="1.200"/><path d="M54.3,222.3h3l-3,3z" fill="#b8f4f8"/><rect x="53.5" y="229" width="6.500" height="6" fill="#00e4f4" stroke="#000090" stroke-width="1.200"/><path d="M54.3,229.8h3l-3,3z" fill="#b8f4f8"/><rect x="61.5" y="221.5" width="6.500" height="6" fill="#00e4f4" stroke="#000090" stroke-width="1.200"/><path d="M62.3,222.3h3l-3,3z" fill="#b8f4f8"/><rect x="61.5" y="229" width="6.500" height="6" fill="#00e4f4" stroke="#000090" stroke-width="1.200"/><path d="M62.3,229.8h3l-3,3z" fill="#b8f4f8"/><path d="M73.300,250h13.600" fill="none" stroke="#0000ff" stroke-width="1.6"/><path d="M76.800,243.600v6.500M81,239.300v11M85.200,243.600v6.500" fill="none" stroke="#0000ff" stroke-width="2.5"/><path d="M92.500,265.500v-9.500l1.500,-1.500h4l1.500,1.500h6.500v9.500z" fill="#c4c4c4" stroke="#808000" stroke-width="1.1"/><path d="M94,258h11.500v6.500h-11.500z" fill="#d0d0c4"/><path d="M104.500,259v4" fill="none" stroke="#e8e060" stroke-width="1"/><path d="M95,270.300h7.600v8.500l-3.800,4l-3.800,-4z" fill="#1010e8" stroke="#000" stroke-width="0.9"/><path d="M95.600,277.500l6.500,-6.500M96,281.500l6,-6" fill="none" stroke="#fff" stroke-width="1"/><path d="M92.500,293l7,-7l7,7l-7,7z" fill="#b8b8b8" stroke="#111" stroke-width="1"/><path d="M92.500,294l7,7l7,-7" fill="none" stroke="#111" stroke-width="1.3"/><circle cx="76.5" cy="306" r="2.900" fill="#00e4f4" stroke="#0030e0" stroke-width="1.100"/><circle cx="76.5" cy="313.7" r="2.900" fill="#00e4f4" stroke="#0030e0" stroke-width="1.100"/><circle cx="84.7" cy="306" r="2.900" fill="#00e4f4" stroke="#0030e0" stroke-width="1.100"/><circle cx="84.7" cy="313.7" r="2.900" fill="#00e4f4" stroke="#0030e0" stroke-width="1.100"/><path d="M91,330.500v-10.500h4.500l1.500,1.500h7v9z" fill="#2a2a10"/><path d="M92.500,330.500l2.500,-6.500h11.500l-2.500,6.500z" fill="#f4e43a" stroke="#222" stroke-width="0.8"/><path d="M94,324.500l2.500,3l4,-5.500" fill="none" stroke="#2a9a9a" stroke-width="1.8"/><path d="M100,326l5.500,-7.500" fill="none" stroke="#2040c0" stroke-width="1.3"/><path d="M110.500,347.500v-12l1.500,-1.500h5l1.500,1.500h6.500l1,1v11z" fill="#c6c6c6" stroke="#111" stroke-width="1.1"/><path d="M110.500,345.500h15.500" fill="none" stroke="#555" stroke-width="1"/><path d="M114.500,350.300h7.500v8l-3.750,4l-3.750,-4z" fill="#101078" stroke="#000" stroke-width="0.8"/><path d="M115,356.500l6.300,-6M115.500,360l6,-5.500" fill="none" stroke="#fff" stroke-width="0.9"/><rect x="111.200" y="365" width="15" height="14.300" fill="#000"/><path d="M115.500,367.200l2,2.300l-2,2.300l-2,-2.300z" fill="#20c040"/><path d="M123,365.500v8.500c0,2.500 -1.500,3.500 -4,3.500h-7" fill="none" stroke="#c8b020" stroke-width="1.1"/><path d="M124.300,365.500v9.500c0,2.500 -1.500,3.500 -4,3.500h-8" fill="none" stroke="#30a040" stroke-width="0.8"/><rect x="110.200" y="381" width="15.200" height="14.800" fill="#000"/><path d="M110.200,385c2.500,-2.200 5,-2.200 7.600,0s5,2.200 7.600,0" fill="none" stroke="#e8e8e8" stroke-width="1.5"/><path d="M110.200,389.500c2.500,-2.200 5,-2.200 7.600,0s5,2.200 7.600,0" fill="none" stroke="#e0e0e0" stroke-width="1.5"/><path d="M110.200,394c2.500,-2.200 5,-2.200 7.600,0s5,2.200 7.600,0" fill="none" stroke="#c8c8c8" stroke-width="1.5"/><path d="M91,397.300v14.500l15,-7.250z" fill="#ff0000"/><path d="M91,397.300v14.500l2.500,-1.200v-12.100z" fill="#900000"/></svg>
<svg class="a" style="left:6px;top:135.3px" width="14" height="2.5"><rect x="0" y="0" width="2" height="2" fill="#c2c2c2"/><rect x="4" y="0" width="2" height="2" fill="#c2c2c2"/><rect x="8" y="0" width="2" height="2" fill="#c2c2c2"/><rect x="12" y="0" width="2" height="2" fill="#c2c2c2"/></svg>
<svg class="i" style="left:6px;top:143.8px" width="16" height="16" viewBox="0 0 16 16"><path d="M0.3,9v5a5.500,1.900 0 0 0 11,0v-5z" fill="#e9c47f"/><path d="M0.3,2.500v6.500a5.500,1.900 0 0 0 11,0v-6.500z" fill="#5f96d4"/><ellipse cx="5.800" cy="2.500" rx="5.500" ry="1.900" fill="#4a80c0"/><path d="M12.400,1.200l-4.600,5.200h2.900v4h3.400v-4h2.900z" fill="#2b2b2b" stroke="#f0f0f0" stroke-width="0.8"/></svg>
<svg class="i" style="left:6px;top:166px" width="16" height="16" viewBox="0 0 16 16"><path d="M0.800,4v9.500a6.500,2 0 0 0 13,0v-9.500z" fill="#e9c47f"/><ellipse cx="7.300" cy="4" rx="6.500" ry="2" fill="#d2a352"/><path d="M3,5.500v7.500a5.500,1.800 0 0 0 11,0v-7.500z" fill="#5f96d4"/><path d="M3,9.500a5.500,1.800 0 0 0 11,0v3.500a5.500,1.800 0 0 1 -11,0z" fill="#8fbbe8"/><path d="M7.300,0v4.500" fill="none" stroke="#2b2b2b" stroke-width="1.4"/><path d="M3.500,13.300c3,1.700 7,1.200 9.500,-1" fill="none" stroke="#2b2b2b" stroke-width="2"/><path d="M15.300,8.500l-.8,5.500l-4.600,-2.800z" fill="#2b2b2b"/></svg>
<svg class="i" style="left:6px;top:187.6px" width="16" height="16" viewBox="0 0 16 16"><path d="M2,14c0,-5 3,-8.500 9,-9.500l1.500,4c-4,.5 -6,3 -6,6.500z" fill="#e9c47f"/><ellipse cx="4.300" cy="14" rx="2.500" ry="1.600" fill="#b98a42"/><path d="M7,7c1,-1.500 3,-2.500 5,-2.800l1.200,3.800c-2,.3 -3.500,1 -4.500,2z" fill="#7fb0e0"/><ellipse cx="13" cy="5.500" rx="1.800" ry="2.800" fill="#2f64a0" transform="rotate(-15 13 5.500)"/><path d="M1,9.500c.5,-4 3,-6.500 6,-7.500" fill="none" stroke="#2b2b2b" stroke-width="1.8"/><path d="M9.500,0.500l-4.500,.5l2.500,3.800z" fill="#2b2b2b"/></svg>
<svg class="i" style="left:6px;top:209.8px" width="16" height="16" viewBox="0 0 16 16"><path d="M0.500,12l4,-3h8l3,3l-7,3.500z" fill="#e9c47f"/><path d="M0.500,12l8,3.500v-1.500l-8,-3.500z" fill="#b98a42"/><path d="M4,10l1.500,-8.500h4l2,8.500l-3,1.500z" fill="#4d86c6"/><path d="M9.500,1.500l2,8.500l-3,1.500l-1,-9z" fill="#2f64a0"/><path d="M12.5,10v-6" fill="none" stroke="#2b2b2b" stroke-width="1.6"/><path d="M12.5,2l-3,4h6z" fill="#2b2b2b"/></svg>
<div class="a" style="left:3px;top:233px;width:22px;height:1px;background:#cfcfcf;"></div>
<svg class="i" style="left:6px;top:240px" width="16" height="16" viewBox="0 0 16 16"><path d="M0.200,8.700L7.900,11.800V13.800L0.200,11.300z" fill="#e9c47f"/><path d="M8.200,1.600L15.500,4L12,5.600z" fill="#c9993f"/><path d="M12,5.600L15.500,4V10.400L7.900,13.800V11.800C8,8.500 9.500,6.200 12,5.600z" fill="#b98a42"/><path d="M0.200,8.700C1,5 4,2.300 8.200,1.600L12,5.600C9.500,6.200 8,8.500 7.900,11.800z" fill="#4d86c6"/></svg>
<svg class="a" style="left:13px;top:261.8px" width="4" height="7"><path d="M0.300,0.500v6l3,-3z" fill="#858585"/></svg>
<svg class="i" style="left:6px;top:276px" width="16" height="16" viewBox="0 0 16 16"><g transform="scale(.78)"><path d="M0.200,8.700L7.900,11.800V13.800L0.200,11.300z" fill="#e9c47f"/><path d="M8.200,1.600L15.500,4L12,5.600z" fill="#c9993f"/><path d="M12,5.600L15.500,4V10.400L7.900,13.800V11.800C8,8.500 9.500,6.200 12,5.600z" fill="#b98a42"/><path d="M0.200,8.700C1,5 4,2.300 8.200,1.600L12,5.600C9.500,6.200 8,8.500 7.900,11.800z" fill="#4d86c6"/></g><path d="M4.500,15.300L15.500,4.200V15.300z" fill="#fff" stroke="#2b2b2b" stroke-width="1.4"/><text x="10.300" y="14.300" font-size="7.500" font-weight="bold" font-family="Liberation Serif" fill="#000">1</text></svg>
<svg class="a" style="left:13px;top:296.8px" width="4" height="7"><path d="M0.300,0.500v6l3,-3z" fill="#858585"/></svg>
<div class="a" style="left:3px;top:310.8px;width:22px;height:1px;background:#cfcfcf;"></div>
<svg class="i" style="left:6px;top:318px" width="16" height="16" viewBox="0 0 16 16"><path d="M0.500,4l7.500,-3.500l7.500,3.500v8l-7.500,3.500l-7.500,-3.500z" fill="#e9c47f"/><path d="M8,7.500l7.500,-3.500v8l-7.500,3.500z" fill="#b98a42"/><path d="M0.500,4l7.500,3.500l7.500,-3.500l-7.500,-3.500z" fill="#f0d49a"/><path d="M2,6.500l4.800,2.200v5.300l-4.800,-2.200z" fill="#2f64a0"/><path d="M2,6.500l4.800,2.200l-2.800,3z" fill="#4d86c6"/></svg>
<svg class="i" style="left:6px;top:340px" width="16" height="16" viewBox="0 0 16 16"><path d="M0.500,4.500l5,-2.500l5,2.500v6l-5,2.500l-5,-2.500z" fill="#e9c47f"/><path d="M5.500,7l5,-2.500v6l-5,2.500z" fill="#b98a42"/><path d="M4.500,7.500l5.500,-2.500l5.500,2.500v6l-5.500,2.500l-5.500,-2.500z" fill="#e9c47f"/><path d="M10,10l5.500,-2.500v6l-5.500,2.500z" fill="#b98a42"/><path d="M4.500,7.500l5.500,2.500l5.500,-2.500l-5.500,-2.500z" fill="#f0d49a"/><rect x="2.500" y="6.500" width="4" height="4.500" fill="#4d86c6"/></svg>
<svg class="i" style="left:6px;top:362.5px" width="16" height="16" viewBox="0 0 16 16"><path d="M3,6.500l5,2.500l5,-2.500v4l-5,2.500l-5,-2.500z" fill="#e9c47f"/><path d="M0.500,1.500l9,-1l6,6l-8.500,2z" fill="#dfe9f5" stroke="#2b2b2b" stroke-width="1.3"/><path d="M3.500,2.500l5.500,-.5l4,4l-5.500,1z" fill="#2f64a0"/></svg>
<svg class="a" style="left:13px;top:384px" width="4" height="7"><path d="M0.300,0.500v6l3,-3z" fill="#858585"/></svg>
<div class="a" style="left:3px;top:398px;width:22px;height:1px;background:#cfcfcf;"></div>
<svg class="i" style="left:6px;top:405px" width="16" height="16" viewBox="0 0 16 16"><path d="M0.500,9.500l7.500,3l7.500,-3v2.500l-7.500,3l-7.500,-3z" fill="#e9c47f"/><path d="M0.500,7.500l7.500,-3l7.500,3v2l-7.500,3l-7.500,-3z" fill="#4d86c6"/><path d="M0.500,7.500l7.500,3l7.500,-3l-7.500,-3z" fill="#7fb0e0"/><path d="M8,7.500v-5.500" fill="none" stroke="#2b2b2b" stroke-width="2.2"/><path d="M8,0l-3,4h6z" fill="#2b2b2b"/></svg>
<svg class="i" style="left:6px;top:428px" width="16" height="16" viewBox="0 0 16 16"><path d="M1,2.500l6,-2l4,1.500v6.500l-6,2l-4,-1.500z" fill="#b98a42"/><path d="M0.500,3l7,-1.500l1,7l-7,1.500z" fill="#4d86c6"/><rect x="9" y="9" width="6.500" height="6.500" fill="#4d86c6"/></svg>
<svg class="a" style="left:13px;top:448.8px" width="4" height="7"><path d="M0.300,0.500v6l3,-3z" fill="#858585"/></svg>
<svg class="i" style="left:6px;top:463px" width="16" height="16" viewBox="0 0 16 16"><path d="M3,3h10v10h-10z" fill="none" stroke="#666" stroke-width="1.2"/><rect x="0.500" y="0.500" width="5" height="5" fill="#c9993f"/><rect x="10.500" y="0.500" width="5" height="5" fill="#4d86c6"/><rect x="0.500" y="10.500" width="5" height="5" fill="#4d86c6"/><rect x="10.500" y="10.500" width="5" height="5" fill="#4d86c6"/></svg>
<svg class="a" style="left:13px;top:483.7px" width="4" height="7"><path d="M0.300,0.500v6l3,-3z" fill="#858585"/></svg>
<svg class="i" style="left:6px;top:497px" width="16" height="16" viewBox="0 0 16 16"><path d="M0.500,4.500l5.500,-3.500l9.500,2v7.500l-5.500,4l-9.500,-2.500z" fill="#e9c47f" stroke="#2a4a7a" stroke-width="1.2"/><path d="M0.500,4.500l9.500,2.500l5.500,-4M10,7v7.500M0.500,8.300l9.500,2.500l5.500,-4M3.700,5.300v7.700M6.800,6.100v7.700M3.200,2.800l9.500,2.200M12.800,5v7.500" fill="none" stroke="#2a4a7a" stroke-width="1.1"/></svg>
<svg class="i" style="left:6px;top:519px" width="16" height="16" viewBox="0 0 16 16"><path d="M1.500,9l7,2.500l7,-4v4.500l-7,4l-7,-2.500z" fill="#e9c47f"/><path d="M8.500,11.500l7,-4v4.500l-7,4z" fill="#b98a42"/><path d="M1.500,9l7,-3.500l7,2l-7,4z" fill="#5fa088"/><path d="M4.500,5.500l-3.500,3.500" fill="none" stroke="#2b2b2b" stroke-width="1.6"/><circle cx="6.500" cy="3.500" r="3" fill="#f4f4f4" stroke="#444" stroke-width="1"/><path d="M5.300,3.500h2.400" fill="none" stroke="#8ab" stroke-width="0.8"/></svg>
<svg class="i" style="left:6px;top:541px" width="16" height="16" viewBox="0 0 16 16"><rect x="0.700" y="0.700" width="14.600" height="13.600" fill="#fff" stroke="#3b6fb5" stroke-width="1.300"/><circle cx="5" cy="5" r="2" fill="none" stroke="#3b6fb5" stroke-width="1.100"/><rect x="9.500" y="3" width="3.500" height="3.500" fill="none" stroke="#3b6fb5" stroke-width="1.100"/><rect x="3" y="9" width="4" height="3" fill="none" stroke="#3b6fb5" stroke-width="1.100"/><path d="M9.500,10h4.500M9.500,12.300h4.500M11.700,10v2.300" fill="none" stroke="#3b6fb5" stroke-width="1.1"/></svg>
<svg class="a" style="left:6px;top:566.4px" width="14" height="2.5"><rect x="0" y="0" width="2" height="2" fill="#c2c2c2"/><rect x="4" y="0" width="2" height="2" fill="#c2c2c2"/><rect x="8" y="0" width="2" height="2" fill="#c2c2c2"/><rect x="12" y="0" width="2" height="2" fill="#c2c2c2"/></svg>
<svg class="i" style="left:6px;top:575px" width="16" height="16" viewBox="0 0 16 16"><rect x="1" y="0.500" width="7" height="7" fill="#4d86c6"/><rect x="8" y="0.500" width="7" height="7" fill="#e9c47f"/><rect x="1" y="7.500" width="7" height="7" fill="#e9c47f"/><rect x="8" y="7.500" width="7" height="7" fill="#f0d9a8"/><path d="M15,14.500L12.0355,11.5355" fill="none" stroke="#2b2b2b" stroke-width="1.8"/><path d="M8.50,8.00L14.23,9.34L9.84,13.73z" fill="#2b2b2b"/></svg>
<svg class="i" style="left:6px;top:597px" width="16" height="16" viewBox="0 0 16 16"><path d="M0.500,8.500l6,3l9,-3v3l-9,3.500l-6,-3z" fill="#e9c47f"/><path d="M0.500,3l9,-2.500l6,2.500v5.500l-9,3l-6,-3z" fill="#4d86c6"/><path d="M6.500,6l9,-3v5.500l-9,3z" fill="#2f64a0"/><path d="M0.500,3l6,3l9,-3l-6,-2.500z" fill="#7fb0e0"/><path d="M6.5,13v-5" fill="none" stroke="#2b2b2b" stroke-width="1.6"/><path d="M6.5,6l-3,4h6z" fill="#2b2b2b"/></svg>
<svg class="i" style="left:6px;top:617px" width="16" height="16" viewBox="0 0 16 16"><path d="M0,4l6.500,-3l8,2v8l-8,3.500l-6.500,-2.500z" fill="#e9c47f"/><path d="M6.500,6.500l8,-3.500v8l-8,3.500z" fill="#b98a42"/><path d="M0,4l6.500,2.500l8,-3.500l-8,-2z" fill="#f0d49a"/><path d="M10.500,0v16" fill="none" stroke="#2b2b2b" stroke-width="1.2" stroke-dasharray="1.500 1.500"/><path d="M10.500,5v8" fill="none" stroke="#2f64a0" stroke-width="1.4"/></svg>
<div class="a" style="left:3px;top:639.1px;width:22px;height:1px;background:#cfcfcf;"></div>
<svg class="i" style="left:6px;top:646px" width="16" height="16" viewBox="0 0 16 16"><path d="M0,10.500l5,-2.500l5,2l-5,2.500z" fill="#7fb0e0"/><path d="M0,10.500l5,2v3l-5,-2z" fill="#4d86c6"/><path d="M5,12.500l5,-2.500v3l-5,2.500z" fill="#2f64a0"/><path d="M5,4l5,-2.500l5,2l-5,2.500z" fill="#7fb0e0"/><path d="M5,4l5,2v6l-5,-2z" fill="#4d86c6"/><path d="M10,6l5,-2.500v5l-5,3.500z" fill="#2f64a0"/><g transform="translate(9 4.5)"><path d="M0,9.500l4.500,-8.500l2,1l-4.500,8.500z" fill="#e8b020"/><path d="M0,9.500l-.3,1.800l1.600,-.8z" fill="#555"/><path d="M4.500,1l.6,-1.200l2,1l-.6,1.200z" fill="#d04a30"/></g></svg>
<svg class="i" style="left:6px;top:668px" width="16" height="16" viewBox="0 0 16 16"><path d="M0.500,9l7,3l7,-3.500v3l-7,3.500l-7,-3z" fill="#e9c47f"/><path d="M0.500,9c.5,-4 3,-6.500 7,-6.500l7,1v5l-7,3.500z" fill="#4d86c6"/><path d="M5,1.500l4,-1l6,1.500l-.5,1.500l-7,-1z" fill="#b98a42"/><path d="M7.500,2.500l7,1v5l-7,3.500c1.500,-3 1.500,-6.500 0,-9.500z" fill="#d2a352"/><g transform="translate(9 5)"><path d="M0,9.500l4.500,-8.500l2,1l-4.500,8.500z" fill="#e8b020"/><path d="M0,9.500l-.3,1.800l1.600,-.8z" fill="#555"/><path d="M4.500,1l.6,-1.200l2,1l-.6,1.200z" fill="#d04a30"/></g></svg>
<svg class="a" style="left:1346.5px;top:282.8px" width="14" height="2.5"><rect x="0" y="0" width="2" height="2" fill="#c2c2c2"/><rect x="4" y="0" width="2" height="2" fill="#c2c2c2"/><rect x="8" y="0" width="2" height="2" fill="#c2c2c2"/><rect x="12" y="0" width="2" height="2" fill="#c2c2c2"/></svg>
<svg class="i" style="left:1346px;top:291px" width="16" height="16" viewBox="0 0 16 16"><path d="M1.500,4v11.500M15.500,0.500v5M4,3.500h11.500" fill="none" stroke="#2b2b2b" stroke-width="1"/><path d="M4,0L0,6h2.6L1,11L6.5,4H3.6L5.5,0z" fill="#e0a512" transform="translate(7.8 4.8) scale(1.1)"/></svg>
<svg class="i" style="left:1346px;top:313px" width="16" height="16" viewBox="0 0 16 16"><path d="M1,13c1,-5 4,-9 10,-11l3,2.500c-5,2 -8,5 -9,10z" fill="#b8c4c8" stroke="#5f9a88" stroke-width="0.9"/><path d="M4,6.500l4,3M7,3.500l3.500,3" fill="none" stroke="#e8eeee" stroke-width="1"/><path d="M4,0L0,6h2.6L1,11L6.5,4H3.6L5.5,0z" fill="#e0a512" transform="translate(7.8 4.8) scale(1.1)"/></svg>
<svg class="i" style="left:1346px;top:335px" width="16" height="16" viewBox="0 0 16 16"><path d="M5.500,1.500v7M2,5h7" fill="none" stroke="#3a6fba" stroke-width="2.2"/><rect x="1" y="7.500" width="1.500" height="1.500" fill="#3a6fba"/><path d="M4,0L0,6h2.6L1,11L6.5,4H3.6L5.5,0z" fill="#e0a512" transform="translate(7.8 4.8) scale(1.1)"/></svg>
<svg class="i" style="left:1346px;top:357px" width="16" height="16" viewBox="0 0 16 16"><path d="M2.500,13.500c1.500,-5 4,-8 8,-10" fill="none" stroke="#5f9a88" stroke-width="1.1"/><path d="M10.500,1v5M8,3.500h5M0.500,13.500h4M2.500,12v4" fill="none" stroke="#3a6fba" stroke-width="1.1"/><path d="M4,0L0,6h2.6L1,11L6.5,4H3.6L5.5,0z" fill="#e0a512" transform="translate(7.8 4.8) scale(1.1)"/></svg>
<svg class="i" style="left:1346px;top:379px" width="16" height="16" viewBox="0 0 16 16"><path d="M9,14a6.500,6.500 0 1 1 4,-10" fill="none" stroke="#5f9a88" stroke-width="1.3"/><path d="M4,0L0,6h2.6L1,11L6.5,4H3.6L5.5,0z" fill="#e0a512" transform="translate(7.8 4.8) scale(1.1)"/></svg>
<svg class="i" style="left:1346px;top:401.5px" width="16" height="16" viewBox="0 0 16 16"><path d="M1,15.500c0,-5 2,-7 5.500,-7.500s6,-2 6.500,-7.500" fill="none" stroke="#5f9a88" stroke-width="1.3"/><path d="M4,0L0,6h2.6L1,11L6.5,4H3.6L5.5,0z" fill="#e0a512" transform="translate(7.8 4.8) scale(1.1)"/></svg>
<svg class="i" style="left:1346px;top:423.7px" width="16" height="16" viewBox="0 0 16 16"><path d="M0.500,12.500c3,-2 7,-6 10,-11.500l3.500,2.500c-3,5 -6,9 -10.500,12z" fill="#6fb09a"/><path d="M3,9.500l3.500,3M6,6.500l3.500,3M8.500,3.500l3,3" fill="none" stroke="#3a7a66" stroke-width="0.9"/><path d="M4,0L0,6h2.6L1,11L6.5,4H3.6L5.5,0z" fill="#e0a512" transform="translate(7.8 4.8) scale(1.1)"/></svg>
<svg class="i" style="left:1346px;top:445.3px" width="16" height="16" viewBox="0 0 16 16"><path d="M0.500,6l3,-1.500l3,1.500v8l-3,1.500l-3,-1.500z" fill="#e9c47f"/><path d="M4.500,3l5,-2.500l4.500,2.500v4.500l-4.500,2.500v5l-5,-2.500z" fill="#b98a42"/><path d="M4.500,3l5,2.500v10l-5,-2.500z" fill="#d2a352"/><path d="M4.500,3l5,-2.500l4.500,2.500l-4.500,2.500z" fill="#c9993f"/><path d="M4,0L0,6h2.6L1,11L6.5,4H3.6L5.5,0z" fill="#e0a512" transform="translate(7.8 4.8) scale(1.1)"/></svg>
<svg class="i" style="left:1346px;top:467px" width="16" height="16" viewBox="0 0 16 16"><path d="M1.500,6.500l4,-4.500h6l2,4M1.500,6.500v7.500h6.500M5.500,2v7.500M5.500,9.500l-4,4.500M5.500,9.500h5M11.500,2l-2,4.500h-8" fill="none" stroke="#4f957f" stroke-width="1.2"/><path d="M4,0L0,6h2.6L1,11L6.5,4H3.6L5.5,0z" fill="#e0a512" transform="translate(7.8 4.8) scale(1.1)"/></svg>
<svg class="i" style="left:1346px;top:489px" width="16" height="16" viewBox="0 0 16 16"><circle cx="8" cy="8" r="7" fill="#f2c4ba" stroke="#e89a8c" stroke-width="1.300"/><path d="M3.500,12.500l9,-9" fill="none" stroke="#fff" stroke-width="2.4"/><path d="M2,10c1,4 4,5 7,4.500" fill="none" stroke="#fff" stroke-width="1"/></svg>
<div class="a" style="left:1343px;top:514.5px;width:21px;height:1px;background:#cfcfcf;"></div>
<svg class="i" style="left:1346px;top:519.5px" width="16" height="16" viewBox="0 0 16 16"><rect x="6.500" y="0" width="6.500" height="6.500" fill="#7f4aa8"/><path d="M2.500,8.500h4v4h-4zM0.500,10.500h4v4h-4z" fill="#f4f4f4" stroke="#c4c8cc" stroke-width="1"/><path d="M4,0L0,6h2.6L1,11L6.5,4H3.6L5.5,0z" fill="#e0a512" transform="translate(7.8 4.8) scale(1.1)"/></svg>
<svg class="i" style="left:1346px;top:541px" width="16" height="16" viewBox="0 0 16 16"><rect x="0.500" y="0.5" width="3" height="3" fill="#3f78c0"/><rect x="0.500" y="4.5" width="3" height="3" fill="#3f78c0"/><rect x="0.500" y="8.5" width="3" height="3" fill="#3f78c0"/><rect x="0.500" y="12.5" width="3" height="3" fill="#3f78c0"/><path d="M4.500,0.500h2.500v14h-2.500" fill="none" stroke="#2b2b2b" stroke-width="1.2"/><path d="M4,0L0,6h2.6L1,11L6.5,4H3.6L5.5,0z" fill="#e0a512" transform="translate(9 4) scale(0.95)"/></svg>
<svg class="i" style="left:1346px;top:564px" width="16" height="16" viewBox="0 0 16 16"><rect x="0.500" y="0.5" width="3" height="3" fill="#3f78c0"/><rect x="0.500" y="4.5" width="3" height="3" fill="#3f78c0"/><rect x="0.500" y="8.5" width="3" height="3" fill="#3f78c0"/><rect x="0.500" y="12.5" width="3" height="3" fill="#3f78c0"/><path d="M4.500,0.500h2.500v14h-2.500" fill="none" stroke="#2b2b2b" stroke-width="1.2"/><path d="M8.500,0.500h4l3,3l-2.500,3l-4.500,-2z" fill="#fff" stroke="#3f78c0" stroke-width="1.1"/><path d="M4,0L0,6h2.6L1,11L6.5,4H3.6L5.5,0z" fill="#e0a512" transform="translate(9 6) scale(0.85)"/></svg>
<div class="a" style="left:1343px;top:588.5px;width:21px;height:1px;background:#cfcfcf;"></div>
<svg class="i" style="left:1346px;top:593.5px" width="16" height="16" viewBox="0 0 16 16"><rect x="0.500" y="4" width="3.500" height="3.500" fill="#d84a2b"/><rect x="5" y="0.500" width="3.500" height="3.500" fill="#e0a512"/><rect x="5" y="5" width="4" height="4" fill="#c7278d"/><rect x="0.500" y="8.500" width="3.500" height="3.500" fill="#3f78c0"/><rect x="10" y="0.500" width="4.500" height="4" fill="#4f957f"/><path d="M4,0L0,6h2.6L1,11L6.5,4H3.6L5.5,0z" fill="#e0a512" transform="translate(7.8 4.8) scale(1.1)"/></svg>
<svg class="i" style="left:1346px;top:614.5px" width="16" height="16" viewBox="0 0 16 16"><path d="M0.500,13l7,-3l6,2l-7,3.500z" fill="#2f64a0"/><path d="M0.500,9l7,-3l6,2l-7,3.500z" fill="#3f78c0"/><path d="M0.500,5l7,-3l6,2l-7,3.500z" fill="#4d86c6"/><path d="M4,0L0,6h2.6L1,11L6.5,4H3.6L5.5,0z" fill="#e0a512" transform="translate(7.8 4.8) scale(1.1)"/></svg>
<svg class="i" style="left:1346px;top:637px" width="16" height="16" viewBox="0 0 16 16"><circle cx="7" cy="7" r="6.500" fill="#f2c4ba" stroke="#e89a8c" stroke-width="1.300"/><path d="M3,11l8,-8" fill="none" stroke="#fff" stroke-width="2.2"/><path d="M4,0L0,6h2.6L1,11L6.5,4H3.6L5.5,0z" fill="#ecd59a" transform="translate(9 6) scale(0.9)"/></svg>
<div class="a" style="left:1343px;top:660.5px;width:21px;height:1px;background:#cfcfcf;"></div>
<svg class="i" style="left:3px;top:5px" width="16" height="16" viewBox="0 0 16 16"><path d="M0.500,0.500l5.500,7l-5.500,8h3.500l9,-13.500h-3l-3.500,5l-3,-6.500z" fill="#1a1a1a"/><path d="M3,0.500l9,12.500l2.500,-1l-8.500,-11.500z" fill="#dff0fa" stroke="#3a3a3a" stroke-width="0.5"/><path d="M9,6.500l3.500,-4l1.500,1.500l-3,4.500z" fill="#f0b818"/><path d="M0.500,15.500l3.500,-5l2,1l-2.500,4z" fill="#fafafa"/><path d="M11,1l3,-1l-1,2.500z" fill="#111"/></svg></body></html>
